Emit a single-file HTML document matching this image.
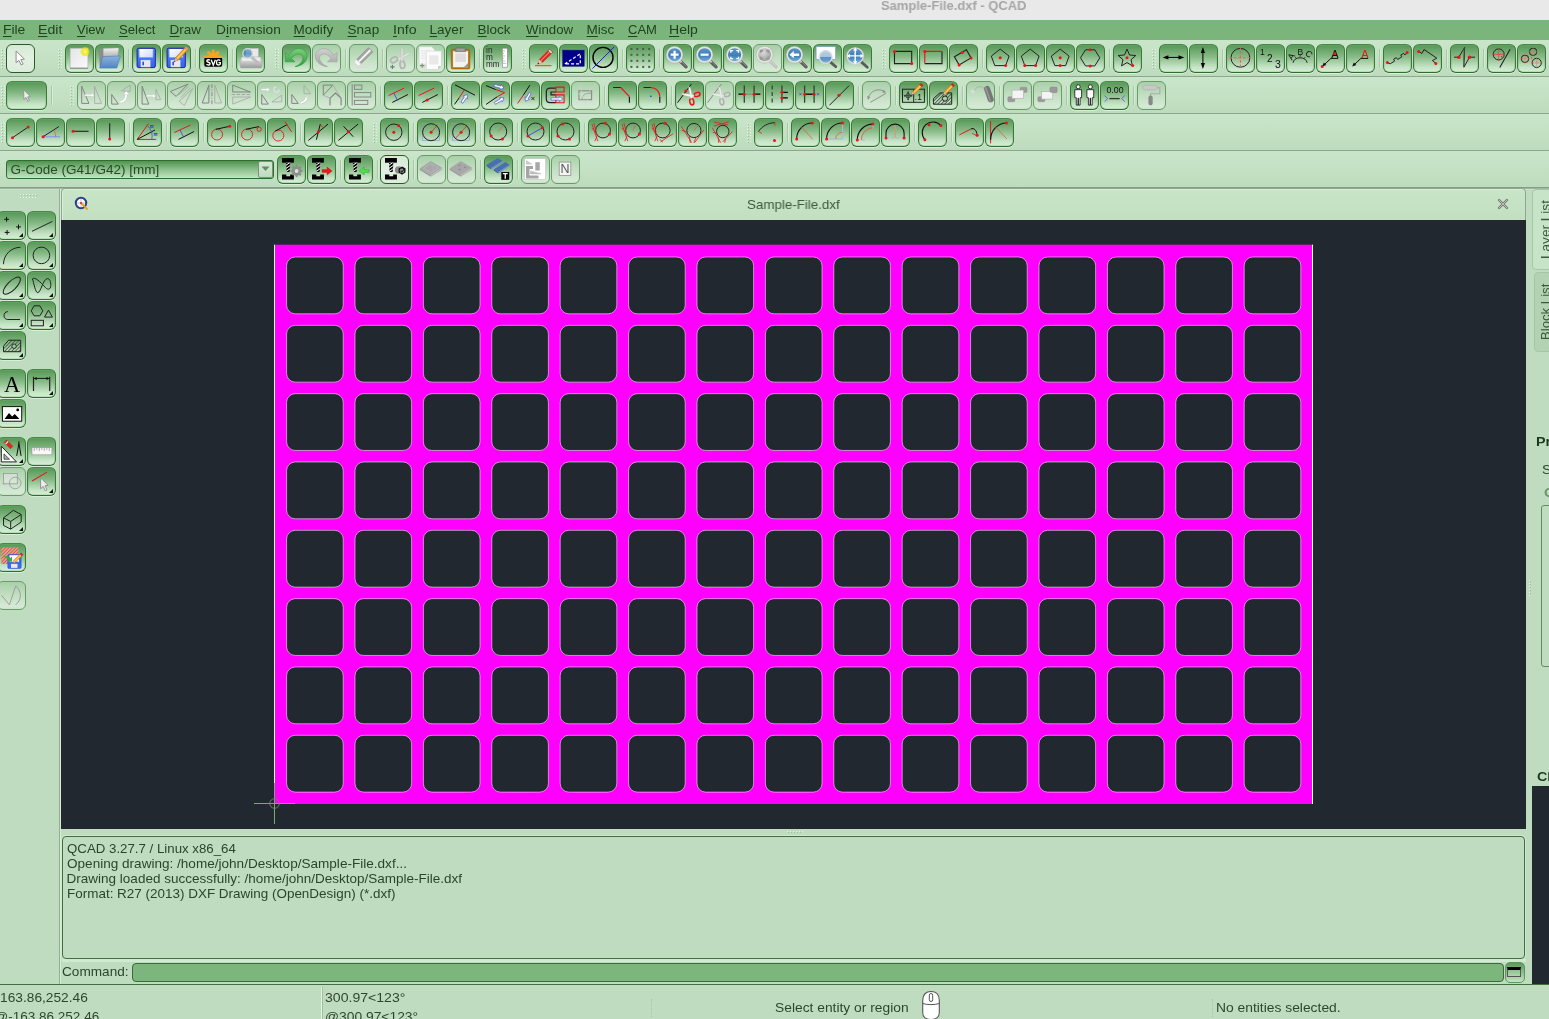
<!DOCTYPE html><html><head><meta charset="utf-8"><title>QCAD</title><style>
*{box-sizing:border-box;margin:0;padding:0}
html,body{width:1549px;height:1019px;overflow:hidden;background:#c0dcc0}
body{position:relative;font-family:"Liberation Sans",sans-serif;font-size:13.5px;color:#2c472c}
.a{position:absolute}
.t{position:absolute;white-space:nowrap;line-height:16px;height:16px;transform-origin:0 0}
.t u{text-decoration-thickness:1px;text-underline-offset:2px}
.tb{position:absolute;left:0;width:1549px;background:linear-gradient(#cae6ca,#c3e0c3 60%,#bddbbd);border-bottom:1px solid #8da68d}
.b{position:absolute;width:29px;height:29px;border:1px solid #2f6e2f;border-top-color:#468a46;border-left-color:#397a39;border-right-color:#397a39;border-radius:6px;background:linear-gradient(#569756,#85b985 42%,#c6e4c6 82%,#d8eed8);box-shadow:inset 0 0 0 1px rgba(120,180,120,.3),0 1px 0 rgba(225,245,225,.7)}
.b.d{border-color:#6a9c6a;background:linear-gradient(#a9cfa9,#c0dec0 45%,#d6ead6 92%,#c8e2c8);box-shadow:none}
.b.c{border-color:#2a5a2a;background:linear-gradient(#d6ead6,#e2f0e2 50%,#dcecdc);box-shadow:none}
.b svg{position:absolute;left:2px;top:2px;width:24px;height:24px;overflow:visible}
.sep{position:absolute;width:1px;height:19px;background:#a8c8a8;box-shadow:1px 0 0 #d4ecd4}
.h{position:absolute;width:5px;height:21px;background-image:radial-gradient(circle,#e6f4e6 0.7px,transparent 0.9px),radial-gradient(circle,#9dbf9d 0.7px,transparent 0.9px);background-size:3px 3px,3px 3px;background-position:0 0,1px 1px}
</style></head><body><div id="root" style="position:absolute;left:0;top:0;width:1549px;height:1019px;overflow:hidden;will-change:transform"><svg class="a" width="0" height="0" style="left:0;top:0"><defs>
<linearGradient id="gPaper" x1="0" y1="0" x2="1" y2="1"><stop offset="0" stop-color="#e4e4e4"/><stop offset="1" stop-color="#fafafa"/></linearGradient>
<radialGradient id="gGlow"><stop offset="0" stop-color="#fffde0"/><stop offset=".35" stop-color="#f6ee30"/><stop offset="1" stop-color="#e8e000" stop-opacity=".55"/></radialGradient>
<linearGradient id="gFold" x1="0" y1="0" x2="0" y2="1"><stop offset="0" stop-color="#8db2dc"/><stop offset="1" stop-color="#4f86c6"/></linearGradient>
<linearGradient id="gGray" x1="0" y1="0" x2="0" y2="1"><stop offset="0" stop-color="#f2f2f2"/><stop offset="1" stop-color="#9a9a9a"/></linearGradient>
<linearGradient id="gFlop" x1="0" y1="0" x2="0" y2="1"><stop offset="0" stop-color="#5a8cff"/><stop offset="1" stop-color="#2f62f0"/></linearGradient>
<linearGradient id="gLab" x1="0" y1="0" x2="1" y2="1"><stop offset="0" stop-color="#ffffff"/><stop offset="1" stop-color="#cdd8ff"/></linearGradient>
<linearGradient id="gLens" x1="0" y1="0" x2="0" y2="1"><stop offset="0" stop-color="#5f97c6"/><stop offset=".55" stop-color="#3f7db8"/><stop offset="1" stop-color="#7db8e4"/></linearGradient>
<radialGradient id="gLensD" cx=".4" cy=".35"><stop offset="0" stop-color="#dcdcdc"/><stop offset="1" stop-color="#a8a8a8"/></radialGradient>
<linearGradient id="gGreenArrow" x1="0" y1="0" x2="0" y2="1"><stop offset="0" stop-color="#7ad07a"/><stop offset="1" stop-color="#2f9a3a"/></linearGradient>
<linearGradient id="gGrayArrow" x1="0" y1="0" x2="0" y2="1"><stop offset="0" stop-color="#d0d0d0"/><stop offset="1" stop-color="#a4a4a4"/></linearGradient>

<pattern id="hat" width="2.500" height="2.500" patternUnits="userSpaceOnUse" patternTransform="rotate(-45)"><path d="M0 1.250H2.500" stroke="#222" stroke-width=".6"/></pattern>
<pattern id="hat2" width="2.600" height="2.600" patternUnits="userSpaceOnUse" patternTransform="rotate(-35)"><rect width="2.600" height="1.700" fill="#000"/></pattern>
<pattern id="hat3" width="2.500" height="2.500" patternUnits="userSpaceOnUse" patternTransform="rotate(-45)"><path d="M0 1.250H2.500" stroke="#222" stroke-width=".55"/></pattern>
<pattern id="hat4" width="2.400" height="2.400" patternUnits="userSpaceOnUse" patternTransform="rotate(-45)"><rect width="2.400" height="2.400" fill="#d9b0a0"/><path d="M0 1.200H2.400" stroke="#e05030" stroke-width="1"/></pattern>
</defs></svg>
<div class="a" style="left:0;top:0;width:1549px;height:20px;background:#e9e9e9"></div>
<div class="a" style="left:0;top:20px;width:1549px;height:20px;background:#7cb57c"></div>
<div class="tb" style="top:40px;height:37px"></div>
<div class="tb" style="top:77px;height:37px"></div>
<div class="tb" style="top:114px;height:37px"></div>
<div class="tb" style="top:151px;height:37px"></div>
<div class="a" style="left:0;top:187px;width:1549px;height:1px;background:#879c84"></div><div class="a" style="left:0;top:188px;width:1549px;height:1px;background:#9fb79d"></div>
<div class="a" style="left:0;top:189px;width:1549px;height:1px;background:#c6e2c6"></div>
<div class="h" style="left:0px;top:48px"></div>
<div class="b c" style="left:6px;top:44px"><svg viewBox="0.2 0.6 24 24"><g transform="translate(1.300 1.200) scale(.88)"><path d="M6.800 3.800v13.400l3.200-2.700 2.600 5.300 2.200-1.100-2.600-5.100 4.100-.5z" fill="#fff" stroke="#8a8a8a" stroke-width="1.100" stroke-linejoin="round"/></g></svg></div>
<div class="h" style="left:57px;top:48px"></div>
<div class="b " style="left:65px;top:44px"><svg viewBox="0.2 0.6 24 24"><rect x="2.300" y="1.800" width="17.800" height="20" fill="url(#gPaper)" stroke="#b0b0b0" stroke-width=".6"/><path d="M2.300 21.800h17.800" stroke="#777" stroke-width=".9"/><circle cx="17.300" cy="5.300" r="4.600" fill="url(#gGlow)"/></svg></div>
<div class="b " style="left:95px;top:44px"><svg viewBox="0.2 0.6 24 24"><path d="M1 3.500l2-1h5l1 1.500h2.500v17.500h-9.500z" fill="#8c8c8c"/><path d="M5.500 2l14.500-.5c.8 0 1 .5 .9 1.200l-1.900 11h-13.500z" fill="url(#gGray)" stroke="#aaa" stroke-width=".4"/><path d="M4.800 10.300l17.700-.800-3.500 12.200h-17z" fill="url(#gFold)" stroke="#3f73b3" stroke-width=".5"/></svg></div>
<div class="sep" style="left:128px;top:49px"></div>
<div class="b " style="left:132px;top:44px"><svg viewBox="0.2 0.6 24 24"><rect x="2.300" y="1.800" width="18.200" height="19.400" rx="1.500" fill="url(#gFlop)" stroke="#1c1c9a" stroke-width="1"/><rect x="4.600" y="2.600" width="13.400" height="8.400" fill="url(#gLab)"/><rect x="6" y="13.600" width="9.600" height="7.100" fill="#e6e6ec" stroke="#9aa" stroke-width=".4"/><rect x="7.600" y="15" width="1.500" height="4" rx=".7" fill="#1f3fd0"/></svg></div>
<div class="b " style="left:162px;top:44px"><svg viewBox="0.2 0.6 24 24"><rect x="2.300" y="1.800" width="18.200" height="19.400" rx="1.500" fill="url(#gFlop)" stroke="#1c1c9a" stroke-width="1"/><rect x="4.600" y="2.600" width="13.400" height="8.400" fill="url(#gLab)"/><rect x="6" y="13.600" width="9.600" height="7.100" fill="#e6e6ec" stroke="#9aa" stroke-width=".4"/><rect x="7.600" y="15" width="1.500" height="4" rx=".7" fill="#1f3fd0"/><g transform="translate(22.500 1.300) rotate(43)"><rect x="-1.800" y="1.500" width="3.600" height="14" fill="#f5a623" stroke="#b56a00" stroke-width=".5"/><rect x="-.5" y="1.500" width="1.100" height="14" fill="#ffd070"/><path d="M-1.800 15.500l1.800 4 1.800-4z" fill="#e8c9a0" stroke="#a67" stroke-width=".4"/><path d="M-.6 18.200l.6 1.500 .6-1.500z" fill="#333"/><rect x="-1.800" y="0" width="3.600" height="1.800" fill="#f49ca0" stroke="#b56a00" stroke-width=".4"/></g></svg></div>
<div class="sep" style="left:195px;top:49px"></div>
<div class="b " style="left:199px;top:44px"><svg viewBox="0.2 0.6 24 24"><g stroke="#f7a41d" stroke-width="2.800" stroke-linecap="round"><path d="M11.400 10.500V4.400M11.400 10.500L6.600 6M11.400 10.500l4.800-4.500M11.400 10.500H4.800M11.400 10.500h6.600"/></g><circle cx="11.400" cy="10" r="3.600" fill="#f7a41d"/><rect x="2.500" y="11" width="17.900" height="9.300" rx="1.600" fill="#000"/><rect x="2.200" y="10.100" width="18.500" height="1.500" fill="#f7a41d"/><g fill="none" stroke="#fff" stroke-width="1.350"><path d="M8.100 13.900C7.400 13.100 5 13 5 14.500C5 16.200 8.300 15.500 8.300 17.300C8.300 19 5.500 18.900 4.700 17.800"/><path d="M9.400 13.300L11.500 18.700L13.600 13.300"/><path d="M18.400 14.300C17.600 13 14.700 13 14.700 16C14.700 19 17.600 19.100 18.500 17.800V16.200H16.700"/></g></svg></div>
<div class="sep" style="left:232px;top:49px"></div>
<div class="b " style="left:236px;top:44px"><svg viewBox="0.2 0.6 24 24"><rect x="7" y="2" width="12.500" height="10" fill="#e9e9e9" stroke="#bbb" stroke-width=".5"/><path d="M3 10.500h18.500l1.500 3.500v6.500c0 .6-.4 1-1 1h-19.500c-.6 0-1-.4-1-1v-6.500z" fill="url(#gGray)" stroke="#aaa" stroke-width=".5"/><path d="M3.500 13.500h17.500" stroke="#fff" stroke-width="1"/><path d="M12.500 10.500l6.500 6" stroke="#bdbdbd" stroke-width="3" stroke-linecap="round"/><circle cx="8.800" cy="7" r="4.700" fill="url(#gLens)" fill-opacity=".75" stroke="#cfd6de" stroke-width="1.300"/></svg></div>
<div class="h" style="left:274px;top:48px"></div>
<div class="b " style="left:282px;top:44px"><svg viewBox="0.2 0.6 24 24"><path d="M.6 5.800L.6 15.400L10.200 15.400L6.700 12.200C9 8.500 12 7.300 14.500 7.600C17.500 8 18.800 10.500 17.800 13.500C16.800 16.500 14 18.800 10.200 20.200C16 19.800 21 16.500 22.200 11C23 6 19 2.200 14 2.200C10 2.200 6.500 4.500 3.800 8.800z" fill="url(#gGreenArrow)" stroke="#2b9a45" stroke-width=".6" stroke-linejoin="round"/></svg></div>
<div class="b d" style="left:312px;top:44px"><svg viewBox="0.2 0.6 24 24"><g transform="translate(22.900 0) scale(-1 1)"><path d="M.6 5.800L.6 15.400L10.200 15.400L6.700 12.200C9 8.500 12 7.300 14.500 7.600C17.500 8 18.800 10.500 17.800 13.500C16.800 16.500 14 18.800 10.200 20.200C16 19.800 21 16.500 22.200 11C23 6 19 2.200 14 2.200C10 2.200 6.500 4.500 3.800 8.800z" fill="url(#gGrayArrow)" stroke="#a0a0a0" stroke-width=".6" stroke-linejoin="round"/></g></svg></div>
<div class="sep" style="left:345px;top:49px"></div>
<div class="b d" style="left:349px;top:44px"><svg viewBox="0.2 0.6 24 24"><g transform="translate(19 3.200) rotate(45)"><rect x="-3.200" y="0" width="6.400" height="17" rx="1.200" fill="#a4a4a4" stroke="#8f8f8f" stroke-width=".5"/><rect x="-.9" y=".5" width="1.900" height="16.500" fill="#f6f6f6"/><rect x="-3.200" y="17" width="6.400" height="3.800" rx=".8" fill="#f4f4f4" stroke="#c4c4c4" stroke-width=".5"/></g><path d="M4.500 21h11" stroke="#dadada" stroke-width="1.300" stroke-linecap="round"/></svg></div>
<div class="sep" style="left:382px;top:49px"></div>
<div class="b d" style="left:386px;top:44px"><svg viewBox="0.2 0.6 24 24"><g fill="none" stroke="#b4b4b4" stroke-width="1.700"><ellipse cx="5.200" cy="13.400" rx="3.800" ry="2.500" transform="rotate(-28 5.200 13.400)"/><ellipse cx="13.600" cy="18.300" rx="2.400" ry="3.800" transform="rotate(-8 13.600 18.300)"/></g><path d="M8.500 12.200L21.200 5.300c-.1 1.600-.9 2.600-2.100 3.300l-8.500 5z" fill="#e6e6e6" stroke="#b4b4b4" stroke-width=".4"/><path d="M12 14.700L12.600 .6c1.100 .9 1.700 2.200 1.600 3.600l-.4 11z" fill="#e6e6e6" stroke="#b4b4b4" stroke-width=".4"/><path d="M1.400 20.500h4.400M3.600 18.300v4.400" stroke="#777" stroke-width="1.100"/></svg></div>
<div class="b d" style="left:416px;top:44px"><svg viewBox="0.2 0.6 24 24"><path d="M.3 .4h12.400l3 3v14.400h-15.400z" fill="#f6f6f6" stroke="#d4d4d4" stroke-width=".5"/><path d="M2.500 4.500h9M2.500 7h9M2.500 9.500h5M2.500 12h5" stroke="#e0e0e0" stroke-width=".7"/><path d="M7.500 4.700h15v15l-3.500 3.400h-11.500z" fill="#fbfbfb" stroke="#d0d0d0" stroke-width=".6"/><path d="M10.500 9h9v9h-9z" fill="#e8e8e8"/><path d="M19 23.100l.6-3.400h2.900z" fill="#c4c4c4"/><path d="M1.300 19.200h4.200M3.400 17.100v4.200" stroke="#888" stroke-width="1.100"/></svg></div>
<div class="b " style="left:446px;top:44px"><svg viewBox="0.2 0.6 24 24"><rect x="2.500" y="3" width="18.500" height="19.500" rx="1" fill="#c17d11" stroke="#8f5902" stroke-width=".6"/><rect x="4.300" y="4.800" width="14.900" height="16" fill="#f3f3f3"/><rect x="6.500" y="7" width="10.500" height="8.500" fill="#dcdcdc"/><path d="M15 20.800l4.200-4.200v4.200z" fill="#999"/><path d="M7.500 1h8.500l1 1.500v2.800h-10.500v-2.800z" fill="#888a85" stroke="#666" stroke-width=".4"/><path d="M8 3.500h7.500" stroke="#b5b7b0" stroke-width="1"/></svg></div>
<div class="sep" style="left:479px;top:49px"></div>
<div class="b " style="left:483px;top:44px"><svg viewBox="0.2 0.6 24 24"><text x="0.300" y="7" font-family="Liberation Sans" font-size="8.300" fill="#2a2a2a">in</text><text x="0.300" y="13.500" font-family="Liberation Sans" font-size="8.300" fill="#2a2a2a">m</text><text x="0.300" y="20.500" font-family="Liberation Sans" font-size="8.300" fill="#2a2a2a" textLength="13.500" lengthAdjust="spacingAndGlyphs">mm</text><rect x="16.500" y="1.800" width="5" height="19" fill="#fff" stroke="#888" stroke-width=".6"/><path d="M16.800 4.500h2.500M16.800 7h1.500M16.800 9.500h2.500M16.800 12h1.500M16.800 14.500h2.500M16.800 17h3.500" stroke="#999" stroke-width=".6"/></svg></div>
<div class="h" style="left:521px;top:48px"></div>
<div class="b " style="left:529px;top:44px"><svg viewBox="0.2 0.6 24 24"><g transform="translate(19.300 4.300) rotate(45)"><rect x="-2.200" y="0" width="4.400" height="14.500" fill="#e3241b" stroke="#a01010" stroke-width=".4"/><rect x="-.8" y="0" width="1.300" height="14.500" fill="#ff7a6a"/><path d="M-2.200 14.500l2.200 4.600 2.200-4.600z" fill="#e9c9a0" stroke="#a67" stroke-width=".3"/><path d="M-.8 17.500l.8 1.800 .8-1.800z" fill="#222"/><rect x="-2.200" y="0" width="4.400" height="2.200" rx=".8" fill="#d8d8d8" stroke="#a01010" stroke-width=".3"/></g><path d="M3.200 19.200h16.500" stroke="#e8584a" stroke-width="1.300"/></svg></div>
<div class="b " style="left:559px;top:44px"><svg viewBox="0.2 0.6 24 24"><rect x="0.800" y="3.700" width="21.600" height="16.200" fill="#00008b" stroke="#202060" stroke-width=".5"/><path d="M3 17.500L18.500 7.300V17.500z" fill="none" stroke="#fff" stroke-width="1.200" stroke-dasharray="3 2"/></svg></div>
<div class="b " style="left:589px;top:44px"><svg viewBox="0.2 0.6 24 24"><circle cx="11.200" cy="11" r="10" fill="none" stroke="#000" stroke-width="1.400"/><path d="M0.600 22.200L22.400 0.500" stroke="#1a1aff" stroke-width="1"/></svg></div>
<div class="sep" style="left:622px;top:49px"></div>
<div class="b " style="left:626px;top:44px"><svg viewBox="0.2 0.6 24 24"><rect x="1.6" y="1.6" width="2" height="2" fill="#4d5e4d"/><rect x="1.6" y="7.4" width="2" height="2" fill="#4d5e4d"/><rect x="1.6" y="13.4" width="2" height="2" fill="#4d5e4d"/><rect x="1.6" y="19.5" width="2" height="2" fill="#4d5e4d"/><rect x="7.5" y="1.6" width="2" height="2" fill="#4d5e4d"/><rect x="7.5" y="7.4" width="2" height="2" fill="#4d5e4d"/><rect x="7.5" y="13.4" width="2" height="2" fill="#4d5e4d"/><rect x="7.5" y="19.5" width="2" height="2" fill="#4d5e4d"/><rect x="13.4" y="1.6" width="2" height="2" fill="#4d5e4d"/><rect x="13.4" y="7.4" width="2" height="2" fill="#4d5e4d"/><rect x="13.4" y="13.4" width="2" height="2" fill="#4d5e4d"/><rect x="13.4" y="19.5" width="2" height="2" fill="#4d5e4d"/><rect x="19.4" y="1.6" width="2" height="2" fill="#4d5e4d"/><rect x="19.4" y="7.4" width="2" height="2" fill="#4d5e4d"/><rect x="19.4" y="13.4" width="2" height="2" fill="#4d5e4d"/><rect x="19.4" y="19.5" width="2" height="2" fill="#4d5e4d"/></svg></div>
<div class="sep" style="left:659px;top:49px"></div>
<div class="b " style="left:663px;top:44px"><svg viewBox="0.2 0.6 24 24"><path d="M15.300 15.600l5 4.900" stroke="#5c5c5c" stroke-width="3.200" stroke-linecap="round"/><path d="M15.600 15.200l4.600 4.500" stroke="#8a8a8a" stroke-width=".9" stroke-linecap="round"/><path d="M14 14.200l1.800 1.800" stroke="#cfcfcf" stroke-width="2"/><circle cx="8.800" cy="8.300" r="7.500" fill="url(#gLens)" stroke="#e2e2e2" stroke-width="1.900"/><circle cx="8.800" cy="8.300" r="8.500" fill="none" stroke="#8f9f8f" stroke-width=".35"/><path d="M4.800 8.300h8M8.800 4.300v8" stroke="#fff" stroke-width="2.200"/></svg></div>
<div class="b " style="left:693px;top:44px"><svg viewBox="0.2 0.6 24 24"><path d="M15.300 15.600l5 4.900" stroke="#5c5c5c" stroke-width="3.200" stroke-linecap="round"/><path d="M15.600 15.200l4.600 4.500" stroke="#8a8a8a" stroke-width=".9" stroke-linecap="round"/><path d="M14 14.200l1.800 1.800" stroke="#cfcfcf" stroke-width="2"/><circle cx="8.800" cy="8.300" r="7.500" fill="url(#gLens)" stroke="#e2e2e2" stroke-width="1.900"/><circle cx="8.800" cy="8.300" r="8.500" fill="none" stroke="#8f9f8f" stroke-width=".35"/><path d="M4.800 8.300h8" stroke="#fff" stroke-width="2.200"/></svg></div>
<div class="b " style="left:723px;top:44px"><svg viewBox="0.2 0.6 24 24"><path d="M15.300 15.600l5 4.900" stroke="#5c5c5c" stroke-width="3.200" stroke-linecap="round"/><path d="M15.600 15.200l4.600 4.500" stroke="#8a8a8a" stroke-width=".9" stroke-linecap="round"/><path d="M14 14.200l1.800 1.800" stroke="#cfcfcf" stroke-width="2"/><circle cx="8.800" cy="8.300" r="7.500" fill="url(#gLens)" stroke="#e2e2e2" stroke-width="1.900"/><circle cx="8.800" cy="8.300" r="8.500" fill="none" stroke="#8f9f8f" stroke-width=".35"/><path d="M5 6.300v-2h2.300M10.400 4.300h2.300v2M12.700 10.300v2h-2.300M7.300 12.300h-2.300v-2" stroke="#fff" stroke-width="1.300" fill="none"/></svg></div>
<div class="b d" style="left:753px;top:44px"><svg viewBox="0.2 0.6 24 24"><path d="M15.300 15.600l5 4.900" stroke="#c0c0c0" stroke-width="3.200" stroke-linecap="round"/><path d="M15.600 15.200l4.600 4.500" stroke="#d8d8d8" stroke-width=".9" stroke-linecap="round"/><path d="M14 14.200l1.800 1.800" stroke="#cfcfcf" stroke-width="2"/><circle cx="8.800" cy="8.300" r="7.500" fill="url(#gLensD)" stroke="#e6e6e6" stroke-width="1.900"/><circle cx="8.800" cy="8.300" r="8.500" fill="none" stroke="#8f9f8f" stroke-width=".35"/><path d="M5 6.300v-2h2.300M10.400 4.300h2.300v2M12.700 10.300v2h-2.300M7.300 12.300h-2.300v-2" stroke="#999" stroke-width="2" fill="none"/></svg></div>
<div class="b " style="left:783px;top:44px"><svg viewBox="0.2 0.6 24 24"><path d="M15.300 15.600l5 4.900" stroke="#5c5c5c" stroke-width="3.200" stroke-linecap="round"/><path d="M15.600 15.200l4.600 4.500" stroke="#8a8a8a" stroke-width=".9" stroke-linecap="round"/><path d="M14 14.200l1.800 1.800" stroke="#cfcfcf" stroke-width="2"/><circle cx="8.800" cy="8.300" r="7.500" fill="url(#gLens)" stroke="#e2e2e2" stroke-width="1.900"/><circle cx="8.800" cy="8.300" r="8.500" fill="none" stroke="#8f9f8f" stroke-width=".35"/><path d="M3.600 8.300l4.400-3.600v2.300h5.400v2.600h-5.400v2.300z" fill="#fff"/></svg></div>
<div class="b " style="left:813px;top:44px"><svg viewBox="0.2 0.6 24 24"><rect x="0.300" y="0.300" width="19.500" height="12.600" fill="#fff" stroke="#7f9fd8" stroke-width=".7"/><path d="M14.500 15.500l5.500 4.800" stroke="#5a5a5a" stroke-width="2.800" stroke-linecap="round"/><circle cx="9.900" cy="10.600" r="6.400" fill="url(#gLens)" fill-opacity=".85" stroke="#dcdcdc" stroke-width="1.400"/><path d="M3.800 10.600a6.100 6.100 0 0 1 12.200 0z" fill="#fff" fill-opacity=".45"/></svg></div>
<div class="b " style="left:843px;top:44px"><svg viewBox="0.2 0.6 24 24"><path d="M15.500 15.500l6 5.300" stroke="#5a5a5a" stroke-width="2.800" stroke-linecap="round"/><circle cx="9.400" cy="9.500" r="8" fill="url(#gLens)" stroke="#dcdcdc" stroke-width="1.400"/><path d="M9.400 1.200l2.200 3h-1.500v4.600h4.600v-1.500l3 2.200-3 2.200v-1.500h-4.600v4.600h1.500l-2.200 3-2.200-3h1.500v-4.600h-4.600v1.500l-3-2.200 3-2.200v1.500h4.600v-4.600h-1.500z" fill="#fff"/></svg></div>
<div class="h" style="left:881px;top:48px"></div>
<div class="b " style="left:889px;top:44px"><svg viewBox="0.2 0.6 24 24"><path d="M2.700 5H19.900V17.200H2.700z" stroke="#222" stroke-width="1.1" fill="none" /><circle cx="2.7" cy="5" r="1.5" fill="#e8161b"/><circle cx="19.9" cy="17.2" r="1.5" fill="#e8161b"/></svg></div>
<div class="b " style="left:919px;top:44px"><svg viewBox="0.2 0.6 24 24"><path d="M3 17.200H20.200V5" stroke="#222" stroke-width="1.1" fill="none" /><path d="M3 17.200V5H20.200" stroke="#e8161b" stroke-width="1.1" fill="none" /><circle cx="3" cy="5" r="1.5" fill="#e8161b"/></svg></div>
<div class="b " style="left:949px;top:44px"><svg viewBox="0.2 0.6 24 24"><path d="M2.600 10.400L14.600 3.400L19.200 11.500L7.300 18.500z" stroke="#222" stroke-width="1.1" fill="none" /><circle cx="10.5" cy="6" r="1.5" fill="#e8161b"/><circle cx="19.2" cy="11.5" r="1.5" fill="#e8161b"/><circle cx="7.3" cy="18.5" r="1.5" fill="#e8161b"/></svg></div>
<div class="sep" style="left:982px;top:49px"></div>
<div class="b " style="left:986px;top:44px"><svg viewBox="0.2 0.6 24 24"><path d="M11.400 2.700L20.300 9.700L16.800 19.200H6L2.500 9.700z" stroke="#222" stroke-width="1" fill="none" /><circle cx="11.4" cy="11.4" r="1.5" fill="#e8161b"/><circle cx="16.8" cy="19.2" r="1.5" fill="#e8161b"/></svg></div>
<div class="b " style="left:1016px;top:44px"><svg viewBox="0.2 0.6 24 24"><path d="M11.400 2.700L20.300 9.700L16.800 19.200H6L2.500 9.700z" stroke="#222" stroke-width="1" fill="none" /><circle cx="6" cy="19.2" r="1.5" fill="#e8161b"/><circle cx="16.8" cy="19.2" r="1.5" fill="#e8161b"/></svg></div>
<div class="b " style="left:1046px;top:44px"><svg viewBox="0.2 0.6 24 24"><path d="M11.400 2.700L20.300 9.700L16.800 19.200H6L2.500 9.700z" stroke="#222" stroke-width="1" fill="none" /><circle cx="11.4" cy="11.4" r="1.5" fill="#e8161b"/><circle cx="11.4" cy="19.2" r="1.5" fill="#e8161b"/></svg></div>
<div class="b " style="left:1076px;top:44px"><svg viewBox="0.2 0.6 24 24"><path d="M1.700 11.400L6.700 3.400H16L21 11.400L16 19.500H6.700z" stroke="#222" stroke-width="1" fill="none" /><circle cx="11.4" cy="3.4" r="1.5" fill="#e8161b"/><circle cx="11.4" cy="19.5" r="1.5" fill="#e8161b"/></svg></div>
<div class="sep" style="left:1109px;top:49px"></div>
<div class="b " style="left:1113px;top:44px"><svg viewBox="0.2 0.6 24 24"><path d="M11.2 2.7L13.7 8.6L20.0 9.1L15.2 13.3L16.7 19.5L11.2 16.2L5.7 19.5L7.2 13.3L2.4 9.1L8.7 8.6z" stroke="#222" stroke-width="1" fill="none" /><circle cx="11.2" cy="11.4" r="1.5" fill="#e8161b"/><circle cx="16.9" cy="19.1" r="1.5" fill="#e8161b"/></svg></div>
<div class="h" style="left:1151px;top:48px"></div>
<div class="b " style="left:1159px;top:44px"><svg viewBox="0.2 0.6 24 24"><path d="M4 11H19.500" stroke="#000" stroke-width="1"/><path d="M0.800 11l5.800-2.100v4.200zM22.500 11l-5.800-2.100v4.200z" fill="#000"/></svg></div>
<div class="b " style="left:1189px;top:44px"><svg viewBox="0.2 0.6 24 24"><path d="M11.100 4V19" stroke="#000" stroke-width="1"/><path d="M11.100 0.700l-2.100 5.800h4.200zM11.100 22.500l-2.100-5.800h4.200z" fill="#000"/></svg></div>
<div class="sep" style="left:1222px;top:49px"></div>
<div class="b " style="left:1226px;top:44px"><svg viewBox="0.2 0.6 24 24"><circle cx="11.600" cy="11.400" r="9.400" fill="none" stroke="#222" stroke-width="1"/><path d="M0.500 11.400H22.700M11.600 0.200V22.700" stroke="#f25a5a" stroke-width="1" stroke-dasharray="2.800 1.700"/></svg></div>
<div class="b " style="left:1256px;top:44px"><svg viewBox="0.2 0.6 24 24"><text x="1.200" y="8.300" font-family="Liberation Sans" font-size="8.500" fill="#111">1</text><text x="8.300" y="15.300" font-family="Liberation Sans" font-size="10" fill="#111">2</text><text x="16.300" y="21.800" font-family="Liberation Sans" font-size="10.500" fill="#111">3</text></svg></div>
<div class="b " style="left:1286px;top:44px"><svg viewBox="0.2 0.6 24 24"><path d="M4.200 16.400A7.300 6.500 0 0 1 18.400 16.400" fill="none" stroke="#222" stroke-width="1"/><path d="M11.400 8.700v1.700M6.500 10.800l1.100 1.400M16.300 10.800l-1.100 1.400" stroke="#222" stroke-width=".9"/><text transform="translate(3.300 14.300) rotate(-55)" font-family="Liberation Sans" font-size="9" fill="#111">A</text><text x="8.700" y="8.600" font-family="Liberation Sans" font-size="8.500" fill="#111">B</text><text transform="translate(15.800 7.800) rotate(40)" font-family="Liberation Sans" font-size="9" fill="#111">C</text></svg></div>
<div class="b " style="left:1316px;top:44px"><svg viewBox="0.2 0.6 24 24"><text x="16" y="11.300" text-anchor="middle" font-family="Liberation Sans" font-size="11" fill="#111">A</text><path d="M19.300 12H12.100L5 18.700" fill="none" stroke="#111" stroke-width="1"/><path d="M3.400 20.200l1.600-4.200 2.500 2.600z" fill="#111"/><circle cx="3.4" cy="20.1" r="1.5" fill="#e8161b"/><circle cx="15.9" cy="7" r="1.5" fill="#e8161b"/></svg></div>
<div class="b " style="left:1346px;top:44px"><svg viewBox="0.2 0.6 24 24"><text x="16" y="11.300" text-anchor="middle" font-family="Liberation Sans" font-size="11" fill="#e8161b">A</text><path d="M19.300 12H12.100L5 18.700" fill="none" stroke="#111" stroke-width="1"/><path d="M3.400 20.200l1.600-4.200 2.500 2.600z" fill="#111"/></svg></div>
<div class="sep" style="left:1379px;top:49px"></div>
<div class="b " style="left:1383px;top:44px"><svg viewBox="0.2 0.6 24 24"><path d="M1.600 16.200L4.500 17.300L8.800 14.700L7.800 12.800L10.500 11.200L11.800 13L16 10.500L15 8.600L17.800 7L19 8.600L21.300 6" stroke="#222" stroke-width="1" fill="none" /><circle cx="1.6" cy="16.2" r="1.5" fill="#e8161b"/><circle cx="21.3" cy="6" r="1.5" fill="#e8161b"/></svg></div>
<div class="b " style="left:1413px;top:44px"><svg viewBox="0.2 0.6 24 24"><path d="M2.800 5L6.100 7.100L8.200 3.100L21 11.800L16.600 14.100L20 17" stroke="#222" stroke-width="1" fill="none" /><circle cx="2.8" cy="5" r="1.5" fill="#e8161b"/><circle cx="20" cy="17" r="1.5" fill="#e8161b"/></svg></div>
<div class="sep" style="left:1446px;top:49px"></div>
<div class="b " style="left:1450px;top:44px"><svg viewBox="0.2 0.6 24 24"><path d="M1.300 10.800H6L11.800 1.100L11.100 20.800L16.700 10.800H22.300" stroke="#222" stroke-width="1" fill="none" /><path d="M11.800 1.100L11.100 20.800L10.300 20.300L10.900 2.600z" fill="#4a6a4a"/><circle cx="6" cy="10.8" r="1.7" fill="#e8161b"/><circle cx="16.7" cy="10.8" r="1.7" fill="#e8161b"/></svg></div>
<div class="sep" style="left:1483px;top:49px"></div>
<div class="b " style="left:1487px;top:44px"><svg viewBox="0.2 0.6 24 24"><circle cx="8.900" cy="8" r="5.500" fill="none" stroke="#222" stroke-width="1"/><path d="M2.500 8H15M8.900 2V14.500" stroke="#ee4040" stroke-width=".8"/><circle cx="11.8" cy="10.2" r="0.7" fill="#e8161b"/><path d="M10 21L20.300 2.900" stroke="#222" stroke-width="1.1" fill="none" /></svg></div>
<div class="b " style="left:1517px;top:44px"><svg viewBox="0.2 0.6 24 24"><circle cx="13.3" cy="5.4" r="3.7" fill="none" stroke="#222" stroke-width="1"/><path d="M8.600000000000001 5.4H18.0M13.3 0.7000000000000002V10.100000000000001" stroke="#e8786a" stroke-width=".9" stroke-dasharray="1.200 .6"/><circle cx="5.2" cy="12.4" r="3.7" fill="none" stroke="#222" stroke-width="1"/><path d="M0.5 12.4H9.9M5.2 7.699999999999999V17.1" stroke="#e8786a" stroke-width=".9" stroke-dasharray="1.200 .6"/><circle cx="16.9" cy="16.5" r="4.6" fill="none" stroke="#222" stroke-width="1"/><path d="M11.299999999999999 16.5H22.5M16.9 10.9V22.1" stroke="#e8786a" stroke-width=".9" stroke-dasharray="1.200 .6"/><circle cx="11.8" cy="11.5" r="0.8" fill="#f05050"/></svg></div>
<div class="h" style="left:0px;top:85px"></div>
<div class="b " style="left:6px;top:81px;width:41px"><svg viewBox="0.2 0.6 24 24"><g transform="translate(12.300 4) scale(.7)"><path d="M3.800 3.800v13.400l3.200-2.700 2.600 5.300 2.200-1.100-2.600-5.100 4.100-.5z" fill="#eee" stroke="#8f8f8f" stroke-width="1.200" stroke-linejoin="round"/></g></svg></div>
<div class="sep" style="left:51px;top:86px"></div>
<div class="h" style="left:69px;top:85px"></div>
<div class="b d" style="left:77px;top:81px"><svg viewBox="0.2 0.6 24 24"><path d="M1.9 2.9L1.9 20L9.1 20z" fill="none" stroke="#808080" stroke-width="0.95"/><path d="M14.8 2.9L14.8 20L21.8 20z" fill="none" stroke="#a6a6a6" stroke-width="0.8"/><g transform="translate(5.1 11.8) rotate(0.0)"><path d="M0 -.9H6.4V-2.300L9.4 0L6.4 2.300V.9H0z" fill="#fff" stroke="#c4c4c4" stroke-width=".5"/></g></svg></div>
<div class="b d" style="left:107px;top:81px"><svg viewBox="0.2 0.6 24 24"><path d="M1.9 11.1L1.9 20.7L8.5 20.7z" fill="none" stroke="#808080" stroke-width="0.95"/><path d="M20.4 1.7L20.4 8.1L11.5 7.4z" fill="none" stroke="#a6a6a6" stroke-width="0.8"/><path d="M10.500 18.800c4.500-1 6-4 6-8.300" fill="none" stroke="#c8c8c8" stroke-width="2.800"/><path d="M10.500 18.800c4.500-1 6-4 6-8.300" fill="none" stroke="#fff" stroke-width="1.800"/><path d="M16.500 7.500l-2.800 3.800h5.600z" fill="#fff" stroke="#c4c4c4" stroke-width=".5"/></svg></div>
<div class="b d" style="left:137px;top:81px"><svg viewBox="0.2 0.6 24 24"><path d="M2.3 2.9L2.3 20.7L9 20.7z" fill="none" stroke="#808080" stroke-width="0.95"/><path d="M16.1 5.9L16.1 16.3L20.9 16.3z" fill="none" stroke="#a6a6a6" stroke-width="0.8"/><g transform="translate(6.5 12.5) rotate(0.0)"><path d="M0 -.9H6.5V-2.300L9.5 0L6.5 2.300V.9H0z" fill="#fff" stroke="#c4c4c4" stroke-width=".5"/></g></svg></div>
<div class="b d" style="left:167px;top:81px"><svg viewBox="0.2 0.6 24 24"><path d="M0.5 8.1L18.3 0.7L6.4 13z" fill="none" stroke="#808080" stroke-width="0.95"/><path d="M9.4 17.8L22.8 5.2L14.6 22.2z" fill="none" stroke="#a6a6a6" stroke-width="0.8"/><path d="M9 11.500L19 3M11 14L20.500 4.500" stroke="#a6a6a6" stroke-width="0.7" fill="none" /></svg></div>
<div class="b d" style="left:197px;top:81px"><svg viewBox="0.2 0.6 24 24"><path d="M9.1 1.7L9.1 19.6L2.4 19.6z" fill="none" stroke="#808080" stroke-width="0.95"/><path d="M15 1.7L15 19.6L21.7 19.6z" fill="none" stroke="#a6a6a6" stroke-width="0.8"/><path d="M12.100 .8V22" stroke="#808080" stroke-width="0.9" fill="none" stroke-dasharray="4 1.500 1 1.500"/></svg></div>
<div class="b d" style="left:227px;top:81px"><svg viewBox="0.2 0.6 24 24"><path d="M2.9 1.7L20.7 8.6L2.9 8.6z" fill="none" stroke="#808080" stroke-width="0.95"/><path d="M2.9 13.6L20.7 13.6L2.9 20.7z" fill="none" stroke="#a6a6a6" stroke-width="0.8"/><path d="M1.700 11.100H21.500" stroke="#a6a6a6" stroke-width="1" fill="none" stroke-dasharray="3.500 1.500"/></svg></div>
<div class="b d" style="left:257px;top:81px"><svg viewBox="0.2 0.6 24 24"><path d="M1.9 11.1L1.9 20.7L8.5 20.7z" fill="none" stroke="#808080" stroke-width="0.95"/><path d="M12.2 18.5L21.9 11.8L21.9 18.5z" fill="none" stroke="#a6a6a6" stroke-width="0.8"/><g transform="translate(1.5 6.2) rotate(0.0)"><path d="M0 -.9H5.5V-2.300L8.5 0L5.5 2.300V.9H0z" fill="#fff" stroke="#c4c4c4" stroke-width=".5"/></g><circle cx="16.700" cy="6.200" r="2.700" fill="none" stroke="#ddd" stroke-width="1.500" stroke-dasharray="12 5"/></svg></div>
<div class="b d" style="left:287px;top:81px"><svg viewBox="0.2 0.6 24 24"><path d="M2 11.1L2 20L8.5 20z" fill="none" stroke="#808080" stroke-width="0.95"/><path d="M14.2 1.7L20.8 10.3L14.2 10.3z" fill="none" stroke="#a6a6a6" stroke-width="0.8"/><path d="M11 19.500c3.500-.8 5.200-2.800 5.800-5.500" fill="none" stroke="#c8c8c8" stroke-width="2.800"/><path d="M11 19.500c3.500-.8 5.200-2.800 5.800-5.500" fill="none" stroke="#fff" stroke-width="1.800"/></svg></div>
<div class="b d" style="left:317px;top:81px"><svg viewBox="0.2 0.6 24 24"><path d="M3.500 1.700H13.100L3.500 11.800z" stroke="#808080" stroke-width="0.95" fill="none" /><path d="M13.100 1.700L21.300 14.800M3.500 11.800L10.200 14.800" stroke="#a6a6a6" stroke-width="0.8" fill="none" /><path d="M10.200 22.200V14.800L15.700 9.600L21.300 14.800V22.200" stroke="#808080" stroke-width="1.1" fill="none" /></svg></div>
<div class="b d" style="left:347px;top:81px"><svg viewBox="0.2 0.6 24 24"><path d="M2.400 .7V22.200" stroke="#808080" stroke-width="0.9" fill="none" /><rect x="4.600" y="1.700" width="7.500" height="4.200" fill="none" stroke="#808080" stroke-width=".9"/><rect x="4.600" y="9.200" width="16.400" height="4.400" fill="none" stroke="#808080" stroke-width=".9"/><rect x="4.600" y="17" width="13.400" height="4" fill="none" stroke="#808080" stroke-width=".9"/></svg></div>
<div class="sep" style="left:380px;top:86px"></div>
<div class="b " style="left:384px;top:81px"><svg viewBox="0.2 0.6 24 24"><path d="M1.800 12.100L17.400 4.700" stroke="#e8161b" stroke-width="1" fill="none" /><path d="M5.500 19L21.100 11.100" stroke="#111" stroke-width="1" fill="none" /><path d="M7 9.600L10.700 17" stroke="#3a4ae0" stroke-width="0.9" fill="none" /></svg></div>
<div class="b " style="left:414px;top:81px"><svg viewBox="0.2 0.6 24 24"><path d="M1.800 12.100L17.400 4.700" stroke="#e8161b" stroke-width="1" fill="none" /><path d="M5.500 19L21.100 11.100" stroke="#111" stroke-width="1" fill="none" /><circle cx="10.4" cy="16.6" r="1.5" fill="#e8161b"/></svg></div>
<div class="sep" style="left:447px;top:86px"></div>
<div class="b " style="left:451px;top:81px"><svg viewBox="0.2 0.6 24 24"><path d="M1.200 1.400L21.200 11.800M.7 21L5.600 14.100" stroke="#111" stroke-width="1" fill="none" /><path d="M5.600 14.100L10.500 6.600" stroke="#e8161b" stroke-width="1" fill="none" /><g transform="translate(8.1 19.3) rotate(-56.6)"><path d="M0 -1.100H6.3V-2.600L9.8 0L6.3 2.600V1.100H0z" fill="#fff" stroke="#5a5af0" stroke-width=".7" stroke-linejoin="round"/></g></svg></div>
<div class="b " style="left:481px;top:81px"><svg viewBox="0.2 0.6 24 24"><path d="M2.300 2.200L12 6.200M2.300 21L13.500 13.300" stroke="#111" stroke-width="1" fill="none" /><path d="M12 6.200L20.900 9.200L13.500 13.300" stroke="#e8161b" stroke-width="1" fill="none" /><g transform="translate(10.5 2) rotate(15.7)"><path d="M0 -1.100H6.5V-2.600L10.0 0L6.5 2.600V1.100H0z" fill="#fff" stroke="#5a5af0" stroke-width=".7" stroke-linejoin="round"/></g><g transform="translate(11.2 20) rotate(-31.7)"><path d="M0 -1.100H7.0V-2.600L10.5 0L7.0 2.600V1.100H0z" fill="#fff" stroke="#5a5af0" stroke-width=".7" stroke-linejoin="round"/></g></svg></div>
<div class="b " style="left:511px;top:81px"><svg viewBox="0.2 0.6 24 24"><path d="M9.500 11.800L16.100 1.700" stroke="#111" stroke-width="1" fill="none" /><path d="M3.800 20L9.500 11.800" stroke="#e8161b" stroke-width="1" fill="none" /><g transform="translate(16.4 9.6) rotate(119.8)"><path d="M0 -1.100H6.0V-2.600L9.5 0L6.0 2.600V1.100H0z" fill="#fff" stroke="#5a5af0" stroke-width=".7" stroke-linejoin="round"/></g><path d="M17.500 13.500l3.200 3.200M20.700 13.500l-3.200 3.200" stroke="#111" stroke-width="0.8" fill="none" /></svg></div>
<div class="b " style="left:541px;top:81px"><svg viewBox="0.2 0.6 24 24"><path d="M12.100 4.700H6.400Q2.500 4.700 2.500 8.600V15.400Q2.500 19.300 6.400 19.300H12.100M12.100 8.600H7.200V11.500H12.100" stroke="#222" stroke-width="1.2" fill="none" /><path d="M12.100 3.700H20.300V8.600H12.100zM12.100 11.500H20.300V19.300H12.100z" stroke="#e8161b" stroke-width="1.1" fill="none" /><g transform="translate(7.2 15.5) rotate(0.0)"><path d="M0 -1.100H8.3V-2.600L11.8 0L8.3 2.600V1.100H0z" fill="#fff" stroke="#5a5af0" stroke-width=".7" stroke-linejoin="round"/></g></svg></div>
<div class="b d" style="left:571px;top:81px"><svg viewBox="0.2 0.6 24 24"><rect x="5.100" y="7.400" width="12.700" height="8.900" fill="none" stroke="#888" stroke-width="1.100"/><path d="M8 16.300a6.500 6.500 0 0 1 6.500-6.500h3.300" fill="none" stroke="#999" stroke-width=".9"/><path d="M1 22L22 1M1 8L22 22M6 1L12 23" stroke="#cfd8cf" stroke-width=".5"/></svg></div>
<div class="sep" style="left:604px;top:86px"></div>
<div class="b " style="left:608px;top:81px"><svg viewBox="0.2 0.6 24 24"><path d="M2.300 4.100H10M18.600 13.300V19.300" stroke="#222" stroke-width="1.2" fill="none" /><path d="M10 4.100L18.600 13.300" stroke="#e8161b" stroke-width="1.2" fill="none" /></svg></div>
<div class="b " style="left:638px;top:81px"><svg viewBox="0.2 0.6 24 24"><path d="M2.700 4.100H10.100M19 13.300V19.300" stroke="#222" stroke-width="1.2" fill="none" /><path d="M10.100 4.100A8.900 9.200 0 0 1 19 13.300" stroke="#e8161b" stroke-width="1.2" fill="none" /><circle cx="10.1" cy="12.9" r="0.8" fill="#2020e0"/></svg></div>
<div class="sep" style="left:671px;top:86px"></div>
<div class="b " style="left:675px;top:81px"><svg viewBox="0.2 0.6 24 24"><path d="M-.3 19.300L13.500 .7" stroke="#111" stroke-width="1" fill="none" /><g fill="none" stroke="#e8161b" stroke-width="1.500"><ellipse cx="19.300" cy="11.100" rx="3" ry="2" transform="rotate(-20 19.300 11.100)"/><ellipse cx="14" cy="18.300" rx="2" ry="3.200" transform="rotate(-12 14 18.300)"/></g><path d="M16.500 11.500L4 9.800c.5 1.200 1.500 2 3 2.300l8 1.700z" fill="#fff" stroke="#bbb" stroke-width=".3"/><path d="M13 15.500L10.600 2.900c1.200.5 2 1.500 2.300 3l1.700 8z" fill="#fff" stroke="#bbb" stroke-width=".3"/><circle cx="8" cy="7.7" r="1.5" fill="#e8161b"/></svg></div>
<div class="b d" style="left:705px;top:81px"><svg viewBox="0.2 0.6 24 24"><path d="M-.3 19.300L13.500 .7" stroke="#888" stroke-width="1" fill="none" /><g fill="none" stroke="#b0b0b0" stroke-width="1.500"><ellipse cx="19.300" cy="11.100" rx="3" ry="2" transform="rotate(-20 19.300 11.100)"/><ellipse cx="14" cy="18.300" rx="2" ry="3.200" transform="rotate(-12 14 18.300)"/></g><path d="M16.500 11.500L4 9.800c.5 1.200 1.500 2 3 2.300l8 1.700z" fill="#f0f0f0" stroke="#bbb" stroke-width=".3"/><path d="M13 15.500L10.600 2.900c1.200.5 2 1.500 2.300 3l1.700 8z" fill="#f0f0f0" stroke="#bbb" stroke-width=".3"/></svg></div>
<div class="b " style="left:735px;top:81px"><svg viewBox="0.2 0.6 24 24"><path d="M6.500 2.200V19.300M16.300 2.200V19.300" stroke="#334433" stroke-width="1.3" fill="none" /><path d="M.6 10.800H6.500M16.300 10.800H22.600" stroke="#000" stroke-width="1.2" fill="none" /><path d="M6.500 10.800H16.300" stroke="#666" stroke-width="0.6" fill="none" /><circle cx="6.5" cy="10.8" r="1.5" fill="#e8161b"/><circle cx="16.3" cy="10.8" r="1.5" fill="#e8161b"/></svg></div>
<div class="b " style="left:765px;top:81px"><svg viewBox="0.2 0.6 24 24"><path d="M4.400 2.200V19.300" stroke="#334433" stroke-width="1.2" fill="none" stroke-dasharray="4 2.500"/><path d="M14.100 2.200V19.300" stroke="#334433" stroke-width="1.3" fill="none" /><path d="M14.100 8.900H20M14.100 14.500H20" stroke="#000" stroke-width="1.2" fill="none" /><path d="M5 8.900H14M5 14.500H14" stroke="#8aa88a" stroke-width="0.5" fill="none" stroke-dasharray="1 1"/><circle cx="14.1" cy="8.9" r="1.5" fill="#e8161b"/><circle cx="14.1" cy="14.5" r="1.5" fill="#e8161b"/></svg></div>
<div class="b " style="left:795px;top:81px"><svg viewBox="0.2 0.6 24 24"><path d="M6.800 2.200V19.300M16.300 2.200V19.300" stroke="#334433" stroke-width="1.3" fill="none" /><path d="M6.800 10.800H16.300" stroke="#000" stroke-width="1.3" fill="none" /><path d="M1.600 9.700l2.200 2.200M3.800 9.700l-2.200 2.200M19.100 9.700l2.200 2.200M21.300 9.700l-2.200 2.200" stroke="#3a3ae0" stroke-width="0.7" fill="none" /><circle cx="6.8" cy="10.8" r="1.5" fill="#e8161b"/><circle cx="16.3" cy="10.8" r="1.5" fill="#e8161b"/></svg></div>
<div class="b " style="left:825px;top:81px"><svg viewBox="0.2 0.6 24 24"><path d="M1.600 21.900L21.300 2.200" stroke="#222" stroke-width="1" fill="none" /><circle cx="11.2" cy="11.8" r="1.5" fill="#e8161b"/></svg></div>
<div class="sep" style="left:858px;top:86px"></div>
<div class="b d" style="left:862px;top:81px"><svg viewBox="0.2 0.6 24 24"><path d="M3.600 14.500C5 8 13 4 19.500 8" stroke="#909090" stroke-width="1" fill="none" /><path d="M3.200 16.500l-.8-4 3 1zM21.300 9.300l-4-.3 1.800-2.600z" fill="#909090"/><path d="M5.500 19L21 10" stroke="#909090" stroke-width="1" fill="none" /></svg></div>
<div class="sep" style="left:895px;top:86px"></div>
<div class="b " style="left:899px;top:81px"><svg viewBox="0.2 0.6 24 24"><rect x=".7" y="5.800" width="21.900" height="13.100" fill="none" stroke="#222" stroke-width="1"/><path d="M11.900 5.800V18.900" stroke="#222" stroke-width="1"/><circle cx="6.300" cy="12.400" r="2.200" fill="none" stroke="#222" stroke-width=".8"/><path d="M2.300 12.400H10.300M6.300 8.300V16.500" stroke="#222" stroke-width=".8"/><path d="M6.300 7.800l-.9 1.300h1.800zM6.300 17l-.9-1.300h1.800zM1.800 12.400l1.300-.9v1.800zM10.800 12.400l-1.300-.9v1.800z" fill="#222"/><text x="13" y="17" font-family="Liberation Sans" font-size="8.500" fill="#111">.1</text><g transform="translate(19 2.2) rotate(45) scale(1)"><rect x="-1.500" y="0" width="3" height="10" fill="#f5a623" stroke="#b56a00" stroke-width=".4"/><rect x="-.4" y="0" width=".9" height="10" fill="#ffd070"/><path d="M-1.500 10l1.500 3.200 1.500-3.200z" fill="#e8c9a0" stroke="#a67" stroke-width=".3"/><path d="M-.5 12l.5 1.200 .5-1.200z" fill="#222"/><rect x="-1.500" y="-1.800" width="3" height="2" fill="#e3241b" stroke="#a01010" stroke-width=".3"/></g></svg></div>
<div class="b " style="left:929px;top:81px"><svg viewBox="0.2 0.6 24 24"><path d="M1.600 20.800V15.200L8.100 9.500H19.900V20.800z" fill="url(#hat)" stroke="#222" stroke-width="1"/><circle cx="13.200" cy="15.200" r="2.600" fill="#a9cfa9" stroke="#222" stroke-width="1"/><g transform="translate(20.5 2.2) rotate(45) scale(1)"><rect x="-1.500" y="0" width="3" height="10" fill="#f5a623" stroke="#b56a00" stroke-width=".4"/><rect x="-.4" y="0" width=".9" height="10" fill="#ffd070"/><path d="M-1.500 10l1.500 3.200 1.500-3.200z" fill="#e8c9a0" stroke="#a67" stroke-width=".3"/><path d="M-.5 12l.5 1.200 .5-1.200z" fill="#222"/><rect x="-1.500" y="-1.800" width="3" height="2" fill="#e3241b" stroke="#a01010" stroke-width=".3"/></g></svg></div>
<div class="sep" style="left:962px;top:86px"></div>
<div class="b d" style="left:966px;top:81px"><svg viewBox="0.2 0.6 24 24"><path d="M15 5C12 2 8 3 5.500 7" fill="none" stroke="#aaa" stroke-width=".9"/><g stroke="#ddd" stroke-width=".8"><path d="M1.500 8.200h5M4 5.700v5M2.200 6.400l3.600 3.600M5.800 6.400l-3.600 3.600"/></g><g transform="translate(14.800 3.800) rotate(-19)"><rect x="0" y="0" width="5.500" height="16.500" rx="2.500" fill="#777" stroke="#666" stroke-width=".4"/><rect x="1" y="0.500" width="1.500" height="15.500" rx=".7" fill="#999"/></g></svg></div>
<div class="sep" style="left:999px;top:86px"></div>
<div class="b d" style="left:1003px;top:81px"><svg viewBox="0.2 0.6 24 24"><rect x="14.300" y="3.900" width="6.900" height="5.100" rx="1" fill="#9a9a9a" stroke="#888" stroke-width=".4"/><rect x="2" y="13.300" width="7" height="5" rx="1" fill="#9a9a9a" stroke="#888" stroke-width=".4"/><rect x="6.2" y="6.7" width="11.6" height="8.5" fill="#f4f4f4" stroke="#aaa" stroke-width=".6"/></svg></div>
<div class="b d" style="left:1033px;top:81px"><svg viewBox="0.2 0.6 24 24"><rect x="14.300" y="3.900" width="6.900" height="5.100" rx="1" fill="#9a9a9a" stroke="#888" stroke-width=".4"/><rect x="2" y="13.300" width="7" height="5" rx="1" fill="#9a9a9a" stroke="#888" stroke-width=".4"/><rect x="5.8" y="8.2" width="11.2" height="7.5" fill="#f4f4f4" stroke="#aaa" stroke-width=".6"/><rect x="14.300" y="3.900" width="6.900" height="5.100" rx="1" fill="#9a9a9a" stroke="#888" stroke-width=".4"/></svg></div>
<div class="sep" style="left:1066px;top:86px"></div>
<div class="b " style="left:1070px;top:81px"><svg viewBox="0.2 0.6 24 24"><circle cx="5.4" cy="3.400" r="2" fill="#fff" stroke="#111" stroke-width=".8"/><path d="M2.0000000000000004 6.300h6.800v8h-1.500v7.400h-1.700v-7h-.4v7h-1.700v-7.400h-1.500z" fill="#fff" stroke="#111" stroke-width=".8" stroke-linejoin="round"/><circle cx="17.5" cy="3.400" r="2" fill="#fff" stroke="#111" stroke-width=".8"/><path d="M14.1 6.300h6.800v8h-1.500v7.400h-1.700v-7h-.4v7h-1.700v-7.400h-1.500z" fill="#fff" stroke="#111" stroke-width=".8" stroke-linejoin="round"/></svg></div>
<div class="b " style="left:1100px;top:81px"><svg viewBox="0.2 0.6 24 24"><text x="12.200" y="9.500" text-anchor="middle" font-family="Liberation Sans" font-size="8.500" fill="#111" textLength="17" lengthAdjust="spacingAndGlyphs">0.00</text><path d="M6.600 15.200H16.900" stroke="#333" stroke-width="1.300"/><path d="M1.800 12.200l3.200 3-3.200 3M22 12.200l-3.200 3 3.200 3" fill="none" stroke="#4a5ae0" stroke-width=".8"/></svg></div>
<div class="sep" style="left:1133px;top:86px"></div>
<div class="b d" style="left:1137px;top:81px"><svg viewBox="0.2 0.6 24 24"><rect x="3.300" y="2" width="14" height="4.500" rx="1.800" fill="#c8c8c8" stroke="#aaa" stroke-width=".5"/><path d="M17.300 4.300h2.700v6h-9.300v2.500" fill="none" stroke="#aaa" stroke-width="1.100"/><rect x="8.900" y="12.400" width="3.700" height="9.300" rx="1.700" fill="#8a8a8a" stroke="#777" stroke-width=".4"/></svg></div>
<div class="h" style="left:0px;top:122px"></div>
<div class="b " style="left:6px;top:118px"><svg viewBox="0.2 0.6 24 24"><path d="M3.700 17.300L19.400 6.600" stroke="#222" stroke-width="1" fill="none" /><circle cx="3.7" cy="17.3" r="1.5" fill="#e8161b"/><circle cx="19.4" cy="6.6" r="1.5" fill="#e8161b"/></svg></div>
<div class="b " style="left:36px;top:118px"><svg viewBox="0.2 0.6 24 24"><path d="M4.300 16.300H21.200" stroke="#8aa2e6" stroke-width="1.5" fill="none" /><path d="M4.300 16.300L20.100 6.200" stroke="#222" stroke-width="1" fill="none" /><path d="M16.900 16.300A12.600 12.600 0 0 0 14.900 9.500" stroke="#e8584a" stroke-width="0.8" fill="none" /><circle cx="4.3" cy="16.3" r="1.5" fill="#e8161b"/></svg></div>
<div class="b " style="left:66px;top:118px"><svg viewBox="0.2 0.6 24 24"><path d="M4.300 10.900H19.800" stroke="#222" stroke-width="1.1" fill="none" /><circle cx="4.3" cy="10.9" r="1.5" fill="#e8161b"/></svg></div>
<div class="b " style="left:96px;top:118px"><svg viewBox="0.2 0.6 24 24"><path d="M10.900 2.900V18.500" stroke="#222" stroke-width="1.1" fill="none" /><circle cx="10.9" cy="18.5" r="1.5" fill="#e8161b"/></svg></div>
<div class="sep" style="left:129px;top:123px"></div>
<div class="b " style="left:133px;top:118px"><svg viewBox="0.2 0.6 24 24"><path d="M12.700 3.200L1.400 19H20.400" stroke="#e8161b" stroke-width="1" fill="none" /><path d="M1.400 19L19.200 9.600" stroke="#111" stroke-width="1" fill="none" /><path d="M11.500 5A17 17 0 0 1 15.800 11.500A16 16 0 0 1 16 19" stroke="#3a4ae0" stroke-width="0.8" fill="none" /><path d="M14.200 5.300h3.600M14.200 6.700h3.600M18 13.200h3.600M18 14.600h3.600" stroke="#2a3ae8" stroke-width="1"/></svg></div>
<div class="sep" style="left:166px;top:123px"></div>
<div class="b " style="left:170px;top:118px"><svg viewBox="0.2 0.6 24 24"><path d="M1.500 12.100L17.500 4.700" stroke="#e8161b" stroke-width="1" fill="none" /><path d="M5.700 19L21.300 11.100" stroke="#111" stroke-width="1" fill="none" /><path d="M7.200 9.600L10.900 17" stroke="#3a4ae0" stroke-width="0.9" fill="none" /></svg></div>
<div class="sep" style="left:203px;top:123px"></div>
<div class="b " style="left:207px;top:118px"><svg viewBox="0.2 0.6 24 24"><circle cx="7.3" cy="14.1" r="5.5" fill="none" stroke="#e8161b" stroke-width="0.9"/><path d="M6.100 8.900L19.900 5.900" stroke="#111" stroke-width="1" fill="none" /><circle cx="19.9" cy="5.9" r="1.5" fill="#e8161b"/></svg></div>
<div class="b " style="left:237px;top:118px"><svg viewBox="0.2 0.6 24 24"><circle cx="7.3" cy="14.1" r="5.5" fill="none" stroke="#e8161b" stroke-width="0.9"/><path d="M6.200 8.900L19.100 6.200" stroke="#111" stroke-width="1" fill="none" /><circle cx="19.4" cy="8.9" r="2.1" fill="none" stroke="#e8161b" stroke-width="0.9"/></svg></div>
<div class="b " style="left:267px;top:118px"><svg viewBox="0.2 0.6 24 24"><circle cx="8.5" cy="15.1" r="5.5" fill="none" stroke="#e8161b" stroke-width="0.9"/><path d="M5.500 10.800L17.400 4.100" stroke="#111" stroke-width="1" fill="none" /><path d="M15.100 1.100L21.800 11.500" stroke="#e8161b" stroke-width="1" fill="none" /></svg></div>
<div class="sep" style="left:300px;top:123px"></div>
<div class="b " style="left:304px;top:118px"><svg viewBox="0.2 0.6 24 24"><path d="M1.600 20L21.200 3.700M9.600 19.300L13.500 3.700" stroke="#111" stroke-width="1" fill="none" /><path d="M13.500 4.700L16.700 7.100" stroke="#e8161b" stroke-width="0.8" fill="none" /><circle cx="11.5" cy="11.4" r="1.5" fill="#e8161b"/></svg></div>
<div class="b " style="left:334px;top:118px"><svg viewBox="0.2 0.6 24 24"><path d="M1.600 20L21.200 3.700M6.800 5.900L16.400 16.300" stroke="#111" stroke-width="1" fill="none" /><circle cx="11.5" cy="11.4" r="1.5" fill="#e8161b"/></svg></div>
<div class="h" style="left:372px;top:122px"></div>
<div class="b " style="left:380px;top:118px"><svg viewBox="0.2 0.6 24 24"><circle cx="11" cy="11.8" r="8.2" fill="none" stroke="#222" stroke-width="1"/><circle cx="11" cy="11.8" r="1.5" fill="#e8161b"/><circle cx="15.7" cy="5.2" r="1.5" fill="#e8161b"/></svg></div>
<div class="sep" style="left:413px;top:123px"></div>
<div class="b " style="left:417px;top:118px"><svg viewBox="0.2 0.6 24 24"><rect x="2.700" y="3.200" width="17" height="16.800" fill="none" stroke="#8a9ae0" stroke-width=".6"/><circle cx="11.3" cy="11.8" r="8.5" fill="none" stroke="#222" stroke-width="1"/><path d="M11.300 11.800L16.900 5.600" stroke="#e8161b" stroke-width="0.7" fill="none" /><circle cx="11.3" cy="11.8" r="1.5" fill="#e8161b"/></svg></div>
<div class="b " style="left:447px;top:118px"><svg viewBox="0.2 0.6 24 24"><rect x="2.700" y="3.200" width="17" height="16.800" fill="none" stroke="#8a9ae0" stroke-width=".6"/><circle cx="11.3" cy="11.8" r="8.5" fill="none" stroke="#222" stroke-width="1"/><path d="M5.800 17.800L16.900 5.600" stroke="#e8161b" stroke-width="0.7" fill="none" /><circle cx="11.3" cy="11.8" r="1.5" fill="#e8161b"/></svg></div>
<div class="sep" style="left:480px;top:123px"></div>
<div class="b " style="left:484px;top:118px"><svg viewBox="0.2 0.6 24 24"><circle cx="11.4" cy="11.1" r="8.5" fill="none" stroke="#222" stroke-width="1"/><path d="M11.400 11.100L16.700 5.200" stroke="#e8584a" stroke-width="0.7" fill="none" /><circle cx="4.4" cy="15.5" r="1.5" fill="#e8161b"/><circle cx="15.6" cy="18.5" r="1.5" fill="#e8161b"/></svg></div>
<div class="sep" style="left:517px;top:123px"></div>
<div class="b " style="left:521px;top:118px"><svg viewBox="0.2 0.6 24 24"><circle cx="11.7" cy="11.1" r="8.5" fill="none" stroke="#222" stroke-width="1"/><path d="M4.200 15.500L18.600 7.400" stroke="#2a4ae8" stroke-width="0.9" fill="none" /><circle cx="4.2" cy="15.5" r="1.5" fill="#e8161b"/><circle cx="18.6" cy="7.4" r="1.5" fill="#e8161b"/></svg></div>
<div class="b " style="left:551px;top:118px"><svg viewBox="0.2 0.6 24 24"><circle cx="11.7" cy="11.1" r="8.5" fill="none" stroke="#222" stroke-width="1"/><circle cx="8.7" cy="3.7" r="1.5" fill="#e8161b"/><circle cx="4.2" cy="15.5" r="1.5" fill="#e8161b"/><circle cx="15.7" cy="18.5" r="1.5" fill="#e8161b"/></svg></div>
<div class="sep" style="left:584px;top:123px"></div>
<div class="b " style="left:588px;top:118px"><svg viewBox="0.2 0.6 24 24"><circle cx="12.2" cy="10.1" r="7.4" fill="none" stroke="#222" stroke-width="1"/><path d="M1.200 3.700L7 20.800M3.200 2.600L5.200 11.800M4 20.800L7 14.100M1 7.500L5 12" stroke="#e8161b" stroke-width="0.8" fill="none" /><circle cx="14.7" cy="2.9" r="1.5" fill="#e8161b"/><circle cx="18.7" cy="13.6" r="1.5" fill="#e8161b"/></svg></div>
<div class="b " style="left:618px;top:118px"><svg viewBox="0.2 0.6 24 24"><circle cx="12.2" cy="10.1" r="7.4" fill="none" stroke="#222" stroke-width="1"/><path d="M1.200 3.700L7 20.800M3.200 2.600L5.200 11.800M4 20.800L7 14.100M1 7.500L5 12" stroke="#e8161b" stroke-width="0.8" fill="none" /><path d="M12.200 10.100L15.200 3.700" stroke="#e8584a" stroke-width="0.7" fill="none" /><circle cx="18.6" cy="13.6" r="1.5" fill="#e8161b"/></svg></div>
<div class="b " style="left:648px;top:118px"><svg viewBox="0.2 0.6 24 24"><circle cx="11.9" cy="10.1" r="7.4" fill="none" stroke="#222" stroke-width="1"/><path d="M1.200 3.700L7 20.800M3.200 2.600L5.200 11.800M4 20.800L7 14.100M1 7.500L5 12" stroke="#e8161b" stroke-width="0.8" fill="none" /><path d="M9.700 21.500L22.300 13.300M9 19L12 21.800" stroke="#e8161b" stroke-width="0.8" fill="none" /><circle cx="14.4" cy="2.9" r="1.5" fill="#e8161b"/></svg></div>
<div class="b " style="left:678px;top:118px"><svg viewBox="0.2 0.6 24 24"><circle cx="13.1" cy="10.1" r="7.1" fill="none" stroke="#222" stroke-width="1"/><path d="M13.100 10.100L17.500 4.700" stroke="#e8584a" stroke-width="0.7" fill="none" /><path d="M.5 5.900L10.900 22.200M13.900 22.200L23 9.600M8.500 16L9.500 22.500M15 17.500L13 22.500M1 10L6.500 11.500" stroke="#e8161b" stroke-width="0.8" fill="none" /></svg></div>
<div class="b " style="left:708px;top:118px"><svg viewBox="0.2 0.6 24 24"><circle cx="12" cy="11.1" r="6.2" fill="none" stroke="#222" stroke-width="1"/><path d="M3.100 5.600L18 1.400M1.600 7.400L9.800 22.200M12 21.500L21.700 11.100M3.500 1.800L17.500 4.500M7.500 17L8 22.500M14.500 18L14 22.500M2 12L6 12.800" stroke="#e8161b" stroke-width="0.8" fill="none" /></svg></div>
<div class="h" style="left:746px;top:122px"></div>
<div class="b " style="left:754px;top:118px"><svg viewBox="0.2 0.6 24 24"><path d="M1.700 11.100C5 6 11 2.500 18 2.200" stroke="#222" stroke-width="1" fill="none" /><path d="M18 1.700V5.200M1.700 11.100L5 13" stroke="#e8161b" stroke-width="0.8" fill="none" /><circle cx="17.7" cy="20" r="1.5" fill="#e8161b"/></svg></div>
<div class="sep" style="left:787px;top:123px"></div>
<div class="b " style="left:791px;top:118px"><svg viewBox="0.2 0.6 24 24"><path d="M2.900 18.500A15.600 15.900 0 0 1 18.500 2.600" stroke="#111" stroke-width="1.1" fill="none" /><path d="M7.800 6.600L19 19" stroke="#e8584a" stroke-width="0.8" fill="none" /><circle cx="2.9" cy="18.5" r="1.5" fill="#e8161b"/><circle cx="18.5" cy="2.6" r="1.5" fill="#e8161b"/></svg></div>
<div class="b " style="left:821px;top:118px"><svg viewBox="0.2 0.6 24 24"><path d="M18.700 2.600V18.500H2.800" stroke="#a9b9d9" stroke-width="1.2" fill="none" /><path d="M2.800 18.500A15.900 15.900 0 0 1 18.700 2.600" stroke="#111" stroke-width="1.1" fill="none" /><path d="M12 18.500A6.700 6.700 0 0 1 18.700 11.800" stroke="#e8584a" stroke-width="0.8" fill="none" /><circle cx="2.8" cy="18.5" r="1.5" fill="#e8161b"/><circle cx="18.7" cy="2.6" r="1.5" fill="#e8161b"/></svg></div>
<div class="b " style="left:851px;top:118px"><svg viewBox="0.2 0.6 24 24"><path d="M19.100 3.700V8M7.500 19.600H11" stroke="#a9b9d9" stroke-width="1.2" fill="none" /><path d="M3.500 19.600A15.600 15.900 0 0 1 19.100 3.700" stroke="#111" stroke-width="1.1" fill="none" /><path d="M7.500 19.600A11.600 12.200 0 0 1 19.100 7.400" stroke="#e8584a" stroke-width="0.9" fill="none" /><circle cx="3.5" cy="19.6" r="1.5" fill="#e8161b"/><circle cx="19.1" cy="3.7" r="1.5" fill="#e8161b"/></svg></div>
<div class="b " style="left:881px;top:118px"><svg viewBox="0.2 0.6 24 24"><path d="M2.200 17.500H20.300" stroke="#a9b9d9" stroke-width="1.1" fill="none" stroke-dasharray="3 2"/><path d="M11.300 4V17.500" stroke="#e0907a" stroke-width="1" fill="none" /><path d="M2.200 17.500V12.800A9.050 9.050 0 0 1 20.300 12.800V17.500" stroke="#111" stroke-width="1.1" fill="none" /><circle cx="2.2" cy="17.5" r="1.5" fill="#e8161b"/><circle cx="20.3" cy="17.5" r="1.5" fill="#e8161b"/></svg></div>
<div class="sep" style="left:914px;top:123px"></div>
<div class="b " style="left:918px;top:118px"><svg viewBox="0.2 0.6 24 24"><path d="M4.100 19.300A10.600 10.600 0 0 1 20.100 5.200" stroke="#111" stroke-width="1.1" fill="none" /><circle cx="4.1" cy="19.3" r="1.5" fill="#e8161b"/><circle cx="8.2" cy="4.4" r="1.5" fill="#e8161b"/><circle cx="20.1" cy="5.2" r="1.5" fill="#e8161b"/></svg></div>
<div class="sep" style="left:951px;top:123px"></div>
<div class="b " style="left:955px;top:118px"><svg viewBox="0.2 0.6 24 24"><path d="M1.500 14.500L13.100 8.600" stroke="#e8161b" stroke-width="1" fill="none" /><path d="M13.100 8.600C16 7 19 10 19.300 14.800" stroke="#111" stroke-width="1" fill="none" /><path d="M14.300 13L18.300 14.800" stroke="#e8161b" stroke-width="0.8" fill="none" /><circle cx="19.3" cy="14.8" r="1.5" fill="#e8161b"/></svg></div>
<div class="b " style="left:985px;top:118px"><svg viewBox="0.2 0.6 24 24"><path d="M2.800 .7V23" stroke="#e8161b" stroke-width="1" fill="none" /><path d="M2.800 19.300A16 16.700 0 0 1 18.700 2.600" stroke="#111" stroke-width="1.1" fill="none" /><path d="M7.600 6.200L19 18.500" stroke="#e8584a" stroke-width="0.8" fill="none" /><circle cx="18.7" cy="2.6" r="1.5" fill="#e8161b"/></svg></div>
<div class="b " style="left:276.5px;top:155px"><svg viewBox="0.2 0.6 24 24"><rect x="2.200" y=".6" width="11.900" height="4.700" fill="#000"/><path d="M6.200 5.200h4.400l-.6 9.300h-3.200z" fill="#fff"/><path d="M6.200 5.200h4.400l-.6 9.300h-3.200z" fill="url(#hat2)"/><path d="M2.200 17.200h4.300v1.600h3.900v-1.600h3.700v5h-11.900z" fill="#000"/><path d="M22.57 13.02L22.57 14.16L20.91 14.84L20.59 15.62L21.29 17.27L20.49 18.08L18.83 17.38L18.05 17.70L17.38 19.37L16.24 19.37L15.56 17.71L14.78 17.39L13.13 18.09L12.32 17.29L13.02 15.63L12.70 14.85L11.03 14.18L11.03 13.04L12.69 12.36L13.01 11.58L12.31 9.93L13.11 9.12L14.77 9.82L15.55 9.50L16.22 7.83L17.36 7.83L18.04 9.49L18.82 9.81L20.47 9.11L21.28 9.91L20.58 11.57L20.90 12.35z" fill="#8f8f8f" stroke="#7a7a7a" stroke-width=".3"/><circle cx="16.8" cy="13.6" r="1.91" fill="#d4e6d4"/></svg></div>
<div class="b " style="left:306.5px;top:155px"><svg viewBox="0.2 0.6 24 24"><rect x="2.200" y=".6" width="11.900" height="4.700" fill="#000"/><path d="M6.200 5.200h4.400l-.6 9.300h-3.200z" fill="#fff"/><path d="M6.200 5.200h4.400l-.6 9.300h-3.200z" fill="url(#hat2)"/><path d="M2.200 17.200h4.300v1.600h3.900v-1.600h3.700v5h-11.900z" fill="#000"/><path d="M12.300 12.200h5v-2.600l5 4-5 4v-2.600h-5z" fill="#f01818" stroke="#a00" stroke-width=".3"/></svg></div>
<div class="sep" style="left:339.5px;top:160px"></div>
<div class="b " style="left:343.5px;top:155px"><svg viewBox="0.2 0.6 24 24"><rect x="2.200" y=".6" width="11.900" height="4.700" fill="#000"/><path d="M6.200 5.200h4.400l-.6 9.300h-3.200z" fill="#fff"/><path d="M6.200 5.200h4.400l-.6 9.300h-3.200z" fill="url(#hat2)"/><path d="M2.200 17.200h4.300v1.600h3.900v-1.600h3.700v5h-11.900z" fill="#000"/><path d="M22.300 12.200h-5v-2.600l-5 4 5 4v-2.600h5z" fill="#4be04b" stroke="#2a9a2a" stroke-width=".4"/></svg></div>
<div class="sep" style="left:376.5px;top:160px"></div>
<div class="b c" style="left:380px;top:155px"><svg viewBox="0.2 0.6 24 24"><rect x="2.200" y=".6" width="11.900" height="4.700" fill="#000"/><path d="M6.200 5.200h4.400l-.6 9.300h-3.200z" fill="#fff"/><path d="M6.200 5.200h4.400l-.6 9.300h-3.200z" fill="url(#hat2)"/><path d="M2.200 17.200h4.300v1.600h3.900v-1.600h3.700v5h-11.900z" fill="#000"/><circle cx="15.800" cy="12.500" r="3.700" fill="#8c8c8c"/><path d="M19.400 9.200l3.400 2-.2 4-3.400 2.200-3.400-2.200 0-4z" fill="#111"/><circle cx="19.200" cy="13.300" r="2.300" fill="#9a9a9a"/><path d="M17.800 13.300l1.200 1.300 2.500-3" stroke="#111" stroke-width="1.100" fill="none"/></svg></div>
<div class="sep" style="left:413px;top:160px"></div>
<div class="b d" style="left:417px;top:155px"><svg viewBox="0.2 0.6 24 24"><path d="M0 10.800L11 3.700L22.400 10.400L11 17.500z" fill="#a8a8a8"/><path d="M0 10.800L11 17.500V19.400L0 12.700z" fill="#9a9a9a"/><path d="M11 17.500L22.400 10.400V12.300L11 19.400z" fill="#b4b4b4"/><path d="M3.500 10.800L11 6L18.800 10.500L11 15.300z" fill="none" stroke="#bcbcbc" stroke-width=".7"/><path d="M11 6L14.500 12.800" stroke="#b8b8b8" stroke-width=".6"/></svg></div>
<div class="b d" style="left:447px;top:155px"><svg viewBox="0.2 0.6 24 24"><path d="M0 10.800L11 3.700L22.400 10.400L11 17.500z" fill="#a8a8a8"/><path d="M0 10.800L11 17.500V19.400L0 12.700z" fill="#9a9a9a"/><path d="M11 17.500L22.400 10.400V12.300L11 19.400z" fill="#b4b4b4"/><ellipse cx="9.700" cy="8" rx="1.300" ry=".8" fill="#909090"/><ellipse cx="15.300" cy="10" rx="1.300" ry=".8" fill="#909090"/><ellipse cx="9.800" cy="12" rx="1.300" ry=".8" fill="#909090"/></svg></div>
<div class="sep" style="left:480px;top:160px"></div>
<div class="b " style="left:484px;top:155px"><svg viewBox="0.2 0.6 24 24"><path d="M-.2 7.300L11.100 .7L15.700 3.500L4.400 10.600z" fill="#4a6fb0"/><path d="M-.2 7.300L4.400 10.600V12L-.2 8.600z" fill="#3a5a96"/><path d="M4.400 10.600L15.700 3.500V4.900L4.400 12z" fill="#6a8fd0"/><path d="M6.900 11.900L18.600 4.600L22.800 7.300L11.500 14.600z" fill="#4a6fb0"/><path d="M6.900 11.900L11.500 14.600V16L6.900 13.200z" fill="#3a5a96"/><path d="M11.500 14.600L22.800 7.300V8.700L11.500 16z" fill="#6a8fd0"/><rect x="14.500" y="14.600" width="7.900" height="7.800" fill="#000"/><path d="M16 16.300h4.900M18.450 16.300v5" stroke="#fff" stroke-width="1.300"/></svg></div>
<div class="sep" style="left:517px;top:160px"></div>
<div class="b d" style="left:521px;top:155px"><svg viewBox="0.2 0.6 24 24"><rect x=".9" y="1.200" width="20.900" height="20.700" fill="#fff" stroke="#bbb" stroke-width=".5"/><path d="M2.200 2.500L9 7.200H2.200z" fill="#c8c8c8"/><path d="M2.200 8.700h7v3h-3.500v6.500h9v3h-12.500z" fill="#a4a4a4"/><rect x="11.500" y="4.800" width="4.500" height="8.300" fill="#a8a8a8"/><path d="M6.700 13.500L17.500 16.500H6.700z" fill="#c0c0c0" stroke="#aaa" stroke-width=".4"/></svg></div>
<div class="b d" style="left:551px;top:155px"><svg viewBox="0.2 0.6 24 24"><rect x="5.400" y="4.700" width="11.600" height="13.500" fill="#f4f4f4" stroke="#909090" stroke-width=".8"/><text x="11.200" y="16" text-anchor="middle" font-family="Liberation Sans" font-size="12.500" fill="#555">N</text></svg></div>
<div class="a" style="left:6px;top:160px;width:268px;height:19px;border:1px solid #2f6e2f;border-radius:3px;background:linear-gradient(#4f934f,#8cc08c 50%,#c4e4c4)"></div>
<div class="a" style="left:258px;top:161px;width:15px;height:17px;border:1px solid #7f8f7f;border-radius:2px;background:linear-gradient(#d4e8d4,#c0dcc0)"></div>
<svg class="a" style="left:261px;top:166px" width="9" height="6"><path d="M0.5 0.5h8l-4 4.5z" fill="#5f8f5f"/></svg>
<div class="a" style="left:59px;top:189px;width:1px;height:795px;background:#94ad94"></div>
<div class="a" style="left:60px;top:189px;width:1px;height:795px;background:#d6ecd6"></div>
<div class="a" style="left:19px;top:193px;width:19px;height:5px;background-image:radial-gradient(circle,#e6f4e6 0.7px,transparent 0.9px),radial-gradient(circle,#9dbf9d 0.7px,transparent 0.9px);background-size:3px 3px,3px 3px;background-position:0 0,1px 1px"></div>
<div class="b " style="left:-3px;top:211px"><svg viewBox="0.5 0.6 24 24"><path d="M4.699999999999999 5.9H9.5M7.1 3.5000000000000004V8.3" stroke="#111" stroke-width="1"/><path d="M16.6 13.5H21.4M19 11.1V15.9" stroke="#111" stroke-width="1"/><path d="M5.199999999999999 19H10.0M7.6 16.6V21.4" stroke="#111" stroke-width="1"/></svg></div>
<svg class="a" style="left:19px;top:233px" width="4" height="4"><path d="M4 0v4h-4z" fill="#111"/></svg>
<div class="b " style="left:27px;top:211px"><svg viewBox="0.2 0.6 24 24"><path d="M2.200 17.900L22.600 8" stroke="#222" stroke-width="1" fill="none" /></svg></div>
<svg class="a" style="left:49px;top:233px" width="4" height="4"><path d="M4 0v4h-4z" fill="#111"/></svg>
<div class="b " style="left:-3px;top:241px"><svg viewBox="0.5 0.6 24 24"><path d="M4 20.800A16.900 16.900 0 0 1 20.900 3.900" stroke="#222" stroke-width="1" fill="none" /></svg></div>
<svg class="a" style="left:19px;top:263px" width="4" height="4"><path d="M4 0v4h-4z" fill="#111"/></svg>
<div class="b " style="left:27px;top:241px"><svg viewBox="0.2 0.6 24 24"><circle cx="11.6" cy="12" r="8.3" fill="none" stroke="#222" stroke-width="1"/></svg></div>
<svg class="a" style="left:49px;top:263px" width="4" height="4"><path d="M4 0v4h-4z" fill="#111"/></svg>
<div class="b " style="left:-3px;top:271px"><svg viewBox="0.5 0.6 24 24"><ellipse cx="12.300" cy="12.300" rx="11.300" ry="4.400" transform="rotate(-45 12.300 12.300)" fill="none" stroke="#222" stroke-width="1"/></svg></div>
<svg class="a" style="left:19px;top:293px" width="4" height="4"><path d="M4 0v4h-4z" fill="#111"/></svg>
<div class="b " style="left:27px;top:271px"><svg viewBox="0.2 0.6 24 24"><path d="M2.600 5.500C4 9 5.500 19.500 8 19.300C11 19 13 6 17.500 5.200C20.500 4.700 21.500 10.500 20.800 13.500C20 17 17 16 15 13.500C11 9 5 3 2.600 5.500z" stroke="#222" stroke-width="1" fill="none" /></svg></div>
<svg class="a" style="left:49px;top:293px" width="4" height="4"><path d="M4 0v4h-4z" fill="#111"/></svg>
<div class="b " style="left:-3px;top:301px"><svg viewBox="0.5 0.6 24 24"><path d="M8.300 8.200C5.500 8.200 4.500 10.500 4.500 12.500C4.500 14.500 6 16.100 8.300 16.100H20.600" stroke="#222" stroke-width="1" fill="none" /></svg></div>
<svg class="a" style="left:19px;top:323px" width="4" height="4"><path d="M4 0v4h-4z" fill="#111"/></svg>
<div class="b " style="left:27px;top:301px"><svg viewBox="0.2 0.6 24 24"><path d="M1.400 7.400L4.300 2.400H10.100L13 7.400L10.100 12.400H4.300z" stroke="#222" stroke-width="1" fill="none" /><path d="M14.700 13.700L18.700 6.700L22.600 13.700z" stroke="#222" stroke-width="1" fill="none" /><rect x="1.400" y="16.900" width="12.200" height="5.500" fill="none" stroke="#222" stroke-width="1"/></svg></div>
<svg class="a" style="left:49px;top:323px" width="4" height="4"><path d="M4 0v4h-4z" fill="#111"/></svg>
<div class="b " style="left:-3px;top:331px"><svg viewBox="0.5 0.6 24 24"><path d="M4 18.300V12.800L9.100 6.800H21.200V18.300z" fill="url(#hat3)" stroke="#222" stroke-width="1"/><circle cx="14.600" cy="12.800" r="2.200" fill="#9fc89f" stroke="#222" stroke-width=".9"/></svg></div>
<svg class="a" style="left:19px;top:353px" width="4" height="4"><path d="M4 0v4h-4z" fill="#111"/></svg>
<div class="b " style="left:-3px;top:369px"><svg viewBox="0.5 0.6 24 24"><text x="12.500" y="20.400" text-anchor="middle" font-family="Liberation Serif" font-size="22.500" fill="#000">A</text></svg></div>
<div class="b " style="left:27px;top:369px"><svg viewBox="0.2 0.6 24 24"><path d="M3.700 5.400V19.500M19.900 5.400V19.500" stroke="#222" stroke-width="1.2" fill="none" /><path d="M5 7H18.500" stroke="#111" stroke-width="1" fill="none" /><path d="M3.700 7l3.200-1.500v3zM19.900 7l-3.200-1.500v3z" fill="#111"/></svg></div>
<svg class="a" style="left:49px;top:391px" width="4" height="4"><path d="M4 0v4h-4z" fill="#111"/></svg>
<div class="b " style="left:-3px;top:399px"><svg viewBox="0.5 0.6 24 24"><rect x="2.900" y="5.200" width="19.300" height="14.600" fill="#fff" stroke="#111" stroke-width="1"/><path d="M5 17.500l4.500-6 3.200 3.500 2.500-2.500 4.800 5z" fill="#000"/><circle cx="18.200" cy="8.500" r="1.400" fill="#000"/></svg></div>
<div class="b " style="left:-3px;top:437px"><svg viewBox="0.5 0.6 24 24"><path d="M1.800 6.800V22.500H17z" fill="#fff" stroke="#222" stroke-width="1"/><path d="M4.500 14.500V19.800H10z" fill="#9ac09a" stroke="#333" stroke-width=".8"/><g transform="translate(5.800 1.800) rotate(-45)"><rect x="-1.700" y="0" width="3.400" height="9" fill="#e3241b" stroke="#a01010" stroke-width=".3"/><rect x="-1.700" y="1.500" width="3.400" height="1.300" fill="#ddd"/></g><path d="M19.400 1.800V4M19.400 4L17.200 16.500M19.400 4L21.600 16.500" stroke="#111" stroke-width="1" fill="none"/></svg></div>
<svg class="a" style="left:19px;top:459px" width="4" height="4"><path d="M4 0v4h-4z" fill="#111"/></svg>
<div class="b " style="left:27px;top:437px"><svg viewBox="0.2 0.6 24 24"><rect x="2.200" y="8.300" width="19.900" height="7.100" fill="#f8f8f8" stroke="#999" stroke-width=".6"/><path d="M4.500 8.500v3M7 8.500v2M9.500 8.500v3M12 8.500v2M14.500 8.500v3M17 8.500v2M19.500 8.500v3" stroke="#888" stroke-width=".7"/></svg></div>
<div class="b d" style="left:-3px;top:467px"><svg viewBox="0.5 0.6 24 24"><rect x="4" y="4.200" width="13.800" height="10.200" fill="#e9e9e9" fill-opacity=".5" stroke="#999" stroke-width=".8"/><circle cx="15.700" cy="13.600" r="5.800" fill="none" stroke="#999" stroke-width=".8"/><path d="M2.500 14.400H6" stroke="#aaa" stroke-width=".7"/></svg></div>
<div class="b " style="left:27px;top:467px"><svg viewBox="0.2 0.6 24 24"><path d="M2.200 11.600L17.100 2.700" stroke="#e8161b" stroke-width="1.1" fill="none" /><g transform="translate(7.800 5.500) scale(.8)"><path d="M3.800 3.800v13.400l3.200-2.700 2.600 5.300 2.200-1.100-2.600-5.100 4.100-.5z" fill="#eee" stroke="#8f8f8f" stroke-width="1.200" stroke-linejoin="round"/></g></svg></div>
<svg class="a" style="left:49px;top:489px" width="4" height="4"><path d="M4 0v4h-4z" fill="#111"/></svg>
<div class="b " style="left:-3px;top:505px"><svg viewBox="0.5 0.6 24 24"><path d="M4 10.500L13.800 2.900L21.700 7.100L11.200 14zM4 10.500V18L11.200 21.700L21.700 14.600V7.100M11.200 14V21.700" stroke="#222" stroke-width="1" fill="none" /></svg></div>
<svg class="a" style="left:19px;top:527px" width="4" height="4"><path d="M4 0v4h-4z" fill="#111"/></svg>
<div class="b " style="left:-3px;top:543px"><svg viewBox="0.5 0.6 24 24"><rect x="1.800" y="2.100" width="17.200" height="16.500" fill="url(#hat4)"/><rect x="8.300" y="9.100" width="13.400" height="13.900" rx="1" fill="#3b6cf0" stroke="#2a4ad0" stroke-width=".5"/><rect x="10" y="9.800" width="9.500" height="6.500" fill="#fff"/><rect x="11.500" y="18.500" width="6.500" height="4" fill="#e6e6ec"/><path d="M4 11.500c3-1.500 5.500-1 7 1.200l1.500-1.500v5h-5l1.700-1.700c-1.200-1.700-3-2.300-5.200-3z" fill="#3aa84a"/><g transform="translate(21.5 9.5) rotate(45) scale(0.9)"><rect x="-1.500" y="0" width="3" height="10" fill="#f5a623" stroke="#b56a00" stroke-width=".4"/><rect x="-.4" y="0" width=".9" height="10" fill="#ffd070"/><path d="M-1.500 10l1.500 3.200 1.500-3.200z" fill="#e8c9a0" stroke="#a67" stroke-width=".3"/><path d="M-.5 12l.5 1.200 .5-1.200z" fill="#222"/><rect x="-1.500" y="-1.800" width="3" height="2" fill="#e3241b" stroke="#a01010" stroke-width=".3"/></g></svg></div>
<div class="b d" style="left:-3px;top:581px"><svg viewBox="0.5 0.6 24 24"><path d="M2.100 12L9.900 21.400L16.200 2.500C22.500 8 22.500 16 16.200 21.400" stroke="#999" stroke-width="0.9" fill="none" /></svg></div>
<div class="a" style="left:61px;top:188px;width:1465px;height:36px;background:linear-gradient(#c8e5c8,#c2dfc2 32px);border:1px solid #8ea58e;border-radius:4px 4px 0 0;box-shadow:inset 1px 1px 0 #d8eed8"></div>
<svg class="a" style="left:1497px;top:198px" width="12" height="12"><path d="M2 2l8 8M10 2l-8 8" stroke="#777" stroke-width="2.4" stroke-linecap="round"/><path d="M2 2l8 8M10 2l-8 8" stroke="#c4c4c4" stroke-width="0.9" stroke-linecap="round"/></svg>
<svg class="a" style="left:74px;top:196px" width="16" height="16" viewBox="0 0 16 16"><circle cx="7" cy="7" r="5.2" fill="#fff" stroke="#2a3f8f" stroke-width="2"/><path d="M7 3v8M3 7h8" stroke="#999" stroke-width=".6"/><path d="M7 7l6 6" stroke="#e8a020" stroke-width="1.8" stroke-linecap="round"/><circle cx="7" cy="7" r="1" fill="#c33"/></svg>
<svg class="a" style="left:61px;top:220px" width="1465" height="609" viewBox="61 220 1465 609"><rect x="61" y="220" width="1465" height="609" fill="#222830"/><rect x="274.5" y="244.7" width="1038" height="559.3" fill="#ff00ff"/><path d="M274.5 244.7V804M1312.5 244.7V804" stroke="#fff" stroke-width="1" fill="none"/><rect x="286.60" y="257.00" width="56.6" height="56.8" rx="8.6" fill="#222830" stroke="#fff" stroke-width="0.7" stroke-opacity=".75"/><rect x="355.00" y="257.00" width="56.6" height="56.8" rx="8.6" fill="#222830" stroke="#fff" stroke-width="0.7" stroke-opacity=".75"/><rect x="423.40" y="257.00" width="56.6" height="56.8" rx="8.6" fill="#222830" stroke="#fff" stroke-width="0.7" stroke-opacity=".75"/><rect x="491.80" y="257.00" width="56.6" height="56.8" rx="8.6" fill="#222830" stroke="#fff" stroke-width="0.7" stroke-opacity=".75"/><rect x="560.20" y="257.00" width="56.6" height="56.8" rx="8.6" fill="#222830" stroke="#fff" stroke-width="0.7" stroke-opacity=".75"/><rect x="628.60" y="257.00" width="56.6" height="56.8" rx="8.6" fill="#222830" stroke="#fff" stroke-width="0.7" stroke-opacity=".75"/><rect x="697.00" y="257.00" width="56.6" height="56.8" rx="8.6" fill="#222830" stroke="#fff" stroke-width="0.7" stroke-opacity=".75"/><rect x="765.40" y="257.00" width="56.6" height="56.8" rx="8.6" fill="#222830" stroke="#fff" stroke-width="0.7" stroke-opacity=".75"/><rect x="833.80" y="257.00" width="56.6" height="56.8" rx="8.6" fill="#222830" stroke="#fff" stroke-width="0.7" stroke-opacity=".75"/><rect x="902.20" y="257.00" width="56.6" height="56.8" rx="8.6" fill="#222830" stroke="#fff" stroke-width="0.7" stroke-opacity=".75"/><rect x="970.60" y="257.00" width="56.6" height="56.8" rx="8.6" fill="#222830" stroke="#fff" stroke-width="0.7" stroke-opacity=".75"/><rect x="1039.00" y="257.00" width="56.6" height="56.8" rx="8.6" fill="#222830" stroke="#fff" stroke-width="0.7" stroke-opacity=".75"/><rect x="1107.40" y="257.00" width="56.6" height="56.8" rx="8.6" fill="#222830" stroke="#fff" stroke-width="0.7" stroke-opacity=".75"/><rect x="1175.80" y="257.00" width="56.6" height="56.8" rx="8.6" fill="#222830" stroke="#fff" stroke-width="0.7" stroke-opacity=".75"/><rect x="1244.20" y="257.00" width="56.6" height="56.8" rx="8.6" fill="#222830" stroke="#fff" stroke-width="0.7" stroke-opacity=".75"/><rect x="286.60" y="325.33" width="56.6" height="56.8" rx="8.6" fill="#222830" stroke="#fff" stroke-width="0.7" stroke-opacity=".75"/><rect x="355.00" y="325.33" width="56.6" height="56.8" rx="8.6" fill="#222830" stroke="#fff" stroke-width="0.7" stroke-opacity=".75"/><rect x="423.40" y="325.33" width="56.6" height="56.8" rx="8.6" fill="#222830" stroke="#fff" stroke-width="0.7" stroke-opacity=".75"/><rect x="491.80" y="325.33" width="56.6" height="56.8" rx="8.6" fill="#222830" stroke="#fff" stroke-width="0.7" stroke-opacity=".75"/><rect x="560.20" y="325.33" width="56.6" height="56.8" rx="8.6" fill="#222830" stroke="#fff" stroke-width="0.7" stroke-opacity=".75"/><rect x="628.60" y="325.33" width="56.6" height="56.8" rx="8.6" fill="#222830" stroke="#fff" stroke-width="0.7" stroke-opacity=".75"/><rect x="697.00" y="325.33" width="56.6" height="56.8" rx="8.6" fill="#222830" stroke="#fff" stroke-width="0.7" stroke-opacity=".75"/><rect x="765.40" y="325.33" width="56.6" height="56.8" rx="8.6" fill="#222830" stroke="#fff" stroke-width="0.7" stroke-opacity=".75"/><rect x="833.80" y="325.33" width="56.6" height="56.8" rx="8.6" fill="#222830" stroke="#fff" stroke-width="0.7" stroke-opacity=".75"/><rect x="902.20" y="325.33" width="56.6" height="56.8" rx="8.6" fill="#222830" stroke="#fff" stroke-width="0.7" stroke-opacity=".75"/><rect x="970.60" y="325.33" width="56.6" height="56.8" rx="8.6" fill="#222830" stroke="#fff" stroke-width="0.7" stroke-opacity=".75"/><rect x="1039.00" y="325.33" width="56.6" height="56.8" rx="8.6" fill="#222830" stroke="#fff" stroke-width="0.7" stroke-opacity=".75"/><rect x="1107.40" y="325.33" width="56.6" height="56.8" rx="8.6" fill="#222830" stroke="#fff" stroke-width="0.7" stroke-opacity=".75"/><rect x="1175.80" y="325.33" width="56.6" height="56.8" rx="8.6" fill="#222830" stroke="#fff" stroke-width="0.7" stroke-opacity=".75"/><rect x="1244.20" y="325.33" width="56.6" height="56.8" rx="8.6" fill="#222830" stroke="#fff" stroke-width="0.7" stroke-opacity=".75"/><rect x="286.60" y="393.66" width="56.6" height="56.8" rx="8.6" fill="#222830" stroke="#fff" stroke-width="0.7" stroke-opacity=".75"/><rect x="355.00" y="393.66" width="56.6" height="56.8" rx="8.6" fill="#222830" stroke="#fff" stroke-width="0.7" stroke-opacity=".75"/><rect x="423.40" y="393.66" width="56.6" height="56.8" rx="8.6" fill="#222830" stroke="#fff" stroke-width="0.7" stroke-opacity=".75"/><rect x="491.80" y="393.66" width="56.6" height="56.8" rx="8.6" fill="#222830" stroke="#fff" stroke-width="0.7" stroke-opacity=".75"/><rect x="560.20" y="393.66" width="56.6" height="56.8" rx="8.6" fill="#222830" stroke="#fff" stroke-width="0.7" stroke-opacity=".75"/><rect x="628.60" y="393.66" width="56.6" height="56.8" rx="8.6" fill="#222830" stroke="#fff" stroke-width="0.7" stroke-opacity=".75"/><rect x="697.00" y="393.66" width="56.6" height="56.8" rx="8.6" fill="#222830" stroke="#fff" stroke-width="0.7" stroke-opacity=".75"/><rect x="765.40" y="393.66" width="56.6" height="56.8" rx="8.6" fill="#222830" stroke="#fff" stroke-width="0.7" stroke-opacity=".75"/><rect x="833.80" y="393.66" width="56.6" height="56.8" rx="8.6" fill="#222830" stroke="#fff" stroke-width="0.7" stroke-opacity=".75"/><rect x="902.20" y="393.66" width="56.6" height="56.8" rx="8.6" fill="#222830" stroke="#fff" stroke-width="0.7" stroke-opacity=".75"/><rect x="970.60" y="393.66" width="56.6" height="56.8" rx="8.6" fill="#222830" stroke="#fff" stroke-width="0.7" stroke-opacity=".75"/><rect x="1039.00" y="393.66" width="56.6" height="56.8" rx="8.6" fill="#222830" stroke="#fff" stroke-width="0.7" stroke-opacity=".75"/><rect x="1107.40" y="393.66" width="56.6" height="56.8" rx="8.6" fill="#222830" stroke="#fff" stroke-width="0.7" stroke-opacity=".75"/><rect x="1175.80" y="393.66" width="56.6" height="56.8" rx="8.6" fill="#222830" stroke="#fff" stroke-width="0.7" stroke-opacity=".75"/><rect x="1244.20" y="393.66" width="56.6" height="56.8" rx="8.6" fill="#222830" stroke="#fff" stroke-width="0.7" stroke-opacity=".75"/><rect x="286.60" y="461.99" width="56.6" height="56.8" rx="8.6" fill="#222830" stroke="#fff" stroke-width="0.7" stroke-opacity=".75"/><rect x="355.00" y="461.99" width="56.6" height="56.8" rx="8.6" fill="#222830" stroke="#fff" stroke-width="0.7" stroke-opacity=".75"/><rect x="423.40" y="461.99" width="56.6" height="56.8" rx="8.6" fill="#222830" stroke="#fff" stroke-width="0.7" stroke-opacity=".75"/><rect x="491.80" y="461.99" width="56.6" height="56.8" rx="8.6" fill="#222830" stroke="#fff" stroke-width="0.7" stroke-opacity=".75"/><rect x="560.20" y="461.99" width="56.6" height="56.8" rx="8.6" fill="#222830" stroke="#fff" stroke-width="0.7" stroke-opacity=".75"/><rect x="628.60" y="461.99" width="56.6" height="56.8" rx="8.6" fill="#222830" stroke="#fff" stroke-width="0.7" stroke-opacity=".75"/><rect x="697.00" y="461.99" width="56.6" height="56.8" rx="8.6" fill="#222830" stroke="#fff" stroke-width="0.7" stroke-opacity=".75"/><rect x="765.40" y="461.99" width="56.6" height="56.8" rx="8.6" fill="#222830" stroke="#fff" stroke-width="0.7" stroke-opacity=".75"/><rect x="833.80" y="461.99" width="56.6" height="56.8" rx="8.6" fill="#222830" stroke="#fff" stroke-width="0.7" stroke-opacity=".75"/><rect x="902.20" y="461.99" width="56.6" height="56.8" rx="8.6" fill="#222830" stroke="#fff" stroke-width="0.7" stroke-opacity=".75"/><rect x="970.60" y="461.99" width="56.6" height="56.8" rx="8.6" fill="#222830" stroke="#fff" stroke-width="0.7" stroke-opacity=".75"/><rect x="1039.00" y="461.99" width="56.6" height="56.8" rx="8.6" fill="#222830" stroke="#fff" stroke-width="0.7" stroke-opacity=".75"/><rect x="1107.40" y="461.99" width="56.6" height="56.8" rx="8.6" fill="#222830" stroke="#fff" stroke-width="0.7" stroke-opacity=".75"/><rect x="1175.80" y="461.99" width="56.6" height="56.8" rx="8.6" fill="#222830" stroke="#fff" stroke-width="0.7" stroke-opacity=".75"/><rect x="1244.20" y="461.99" width="56.6" height="56.8" rx="8.6" fill="#222830" stroke="#fff" stroke-width="0.7" stroke-opacity=".75"/><rect x="286.60" y="530.32" width="56.6" height="56.8" rx="8.6" fill="#222830" stroke="#fff" stroke-width="0.7" stroke-opacity=".75"/><rect x="355.00" y="530.32" width="56.6" height="56.8" rx="8.6" fill="#222830" stroke="#fff" stroke-width="0.7" stroke-opacity=".75"/><rect x="423.40" y="530.32" width="56.6" height="56.8" rx="8.6" fill="#222830" stroke="#fff" stroke-width="0.7" stroke-opacity=".75"/><rect x="491.80" y="530.32" width="56.6" height="56.8" rx="8.6" fill="#222830" stroke="#fff" stroke-width="0.7" stroke-opacity=".75"/><rect x="560.20" y="530.32" width="56.6" height="56.8" rx="8.6" fill="#222830" stroke="#fff" stroke-width="0.7" stroke-opacity=".75"/><rect x="628.60" y="530.32" width="56.6" height="56.8" rx="8.6" fill="#222830" stroke="#fff" stroke-width="0.7" stroke-opacity=".75"/><rect x="697.00" y="530.32" width="56.6" height="56.8" rx="8.6" fill="#222830" stroke="#fff" stroke-width="0.7" stroke-opacity=".75"/><rect x="765.40" y="530.32" width="56.6" height="56.8" rx="8.6" fill="#222830" stroke="#fff" stroke-width="0.7" stroke-opacity=".75"/><rect x="833.80" y="530.32" width="56.6" height="56.8" rx="8.6" fill="#222830" stroke="#fff" stroke-width="0.7" stroke-opacity=".75"/><rect x="902.20" y="530.32" width="56.6" height="56.8" rx="8.6" fill="#222830" stroke="#fff" stroke-width="0.7" stroke-opacity=".75"/><rect x="970.60" y="530.32" width="56.6" height="56.8" rx="8.6" fill="#222830" stroke="#fff" stroke-width="0.7" stroke-opacity=".75"/><rect x="1039.00" y="530.32" width="56.6" height="56.8" rx="8.6" fill="#222830" stroke="#fff" stroke-width="0.7" stroke-opacity=".75"/><rect x="1107.40" y="530.32" width="56.6" height="56.8" rx="8.6" fill="#222830" stroke="#fff" stroke-width="0.7" stroke-opacity=".75"/><rect x="1175.80" y="530.32" width="56.6" height="56.8" rx="8.6" fill="#222830" stroke="#fff" stroke-width="0.7" stroke-opacity=".75"/><rect x="1244.20" y="530.32" width="56.6" height="56.8" rx="8.6" fill="#222830" stroke="#fff" stroke-width="0.7" stroke-opacity=".75"/><rect x="286.60" y="598.65" width="56.6" height="56.8" rx="8.6" fill="#222830" stroke="#fff" stroke-width="0.7" stroke-opacity=".75"/><rect x="355.00" y="598.65" width="56.6" height="56.8" rx="8.6" fill="#222830" stroke="#fff" stroke-width="0.7" stroke-opacity=".75"/><rect x="423.40" y="598.65" width="56.6" height="56.8" rx="8.6" fill="#222830" stroke="#fff" stroke-width="0.7" stroke-opacity=".75"/><rect x="491.80" y="598.65" width="56.6" height="56.8" rx="8.6" fill="#222830" stroke="#fff" stroke-width="0.7" stroke-opacity=".75"/><rect x="560.20" y="598.65" width="56.6" height="56.8" rx="8.6" fill="#222830" stroke="#fff" stroke-width="0.7" stroke-opacity=".75"/><rect x="628.60" y="598.65" width="56.6" height="56.8" rx="8.6" fill="#222830" stroke="#fff" stroke-width="0.7" stroke-opacity=".75"/><rect x="697.00" y="598.65" width="56.6" height="56.8" rx="8.6" fill="#222830" stroke="#fff" stroke-width="0.7" stroke-opacity=".75"/><rect x="765.40" y="598.65" width="56.6" height="56.8" rx="8.6" fill="#222830" stroke="#fff" stroke-width="0.7" stroke-opacity=".75"/><rect x="833.80" y="598.65" width="56.6" height="56.8" rx="8.6" fill="#222830" stroke="#fff" stroke-width="0.7" stroke-opacity=".75"/><rect x="902.20" y="598.65" width="56.6" height="56.8" rx="8.6" fill="#222830" stroke="#fff" stroke-width="0.7" stroke-opacity=".75"/><rect x="970.60" y="598.65" width="56.6" height="56.8" rx="8.6" fill="#222830" stroke="#fff" stroke-width="0.7" stroke-opacity=".75"/><rect x="1039.00" y="598.65" width="56.6" height="56.8" rx="8.6" fill="#222830" stroke="#fff" stroke-width="0.7" stroke-opacity=".75"/><rect x="1107.40" y="598.65" width="56.6" height="56.8" rx="8.6" fill="#222830" stroke="#fff" stroke-width="0.7" stroke-opacity=".75"/><rect x="1175.80" y="598.65" width="56.6" height="56.8" rx="8.6" fill="#222830" stroke="#fff" stroke-width="0.7" stroke-opacity=".75"/><rect x="1244.20" y="598.65" width="56.6" height="56.8" rx="8.6" fill="#222830" stroke="#fff" stroke-width="0.7" stroke-opacity=".75"/><rect x="286.60" y="666.98" width="56.6" height="56.8" rx="8.6" fill="#222830" stroke="#fff" stroke-width="0.7" stroke-opacity=".75"/><rect x="355.00" y="666.98" width="56.6" height="56.8" rx="8.6" fill="#222830" stroke="#fff" stroke-width="0.7" stroke-opacity=".75"/><rect x="423.40" y="666.98" width="56.6" height="56.8" rx="8.6" fill="#222830" stroke="#fff" stroke-width="0.7" stroke-opacity=".75"/><rect x="491.80" y="666.98" width="56.6" height="56.8" rx="8.6" fill="#222830" stroke="#fff" stroke-width="0.7" stroke-opacity=".75"/><rect x="560.20" y="666.98" width="56.6" height="56.8" rx="8.6" fill="#222830" stroke="#fff" stroke-width="0.7" stroke-opacity=".75"/><rect x="628.60" y="666.98" width="56.6" height="56.8" rx="8.6" fill="#222830" stroke="#fff" stroke-width="0.7" stroke-opacity=".75"/><rect x="697.00" y="666.98" width="56.6" height="56.8" rx="8.6" fill="#222830" stroke="#fff" stroke-width="0.7" stroke-opacity=".75"/><rect x="765.40" y="666.98" width="56.6" height="56.8" rx="8.6" fill="#222830" stroke="#fff" stroke-width="0.7" stroke-opacity=".75"/><rect x="833.80" y="666.98" width="56.6" height="56.8" rx="8.6" fill="#222830" stroke="#fff" stroke-width="0.7" stroke-opacity=".75"/><rect x="902.20" y="666.98" width="56.6" height="56.8" rx="8.6" fill="#222830" stroke="#fff" stroke-width="0.7" stroke-opacity=".75"/><rect x="970.60" y="666.98" width="56.6" height="56.8" rx="8.6" fill="#222830" stroke="#fff" stroke-width="0.7" stroke-opacity=".75"/><rect x="1039.00" y="666.98" width="56.6" height="56.8" rx="8.6" fill="#222830" stroke="#fff" stroke-width="0.7" stroke-opacity=".75"/><rect x="1107.40" y="666.98" width="56.6" height="56.8" rx="8.6" fill="#222830" stroke="#fff" stroke-width="0.7" stroke-opacity=".75"/><rect x="1175.80" y="666.98" width="56.6" height="56.8" rx="8.6" fill="#222830" stroke="#fff" stroke-width="0.7" stroke-opacity=".75"/><rect x="1244.20" y="666.98" width="56.6" height="56.8" rx="8.6" fill="#222830" stroke="#fff" stroke-width="0.7" stroke-opacity=".75"/><rect x="286.60" y="735.31" width="56.6" height="56.8" rx="8.6" fill="#222830" stroke="#fff" stroke-width="0.7" stroke-opacity=".75"/><rect x="355.00" y="735.31" width="56.6" height="56.8" rx="8.6" fill="#222830" stroke="#fff" stroke-width="0.7" stroke-opacity=".75"/><rect x="423.40" y="735.31" width="56.6" height="56.8" rx="8.6" fill="#222830" stroke="#fff" stroke-width="0.7" stroke-opacity=".75"/><rect x="491.80" y="735.31" width="56.6" height="56.8" rx="8.6" fill="#222830" stroke="#fff" stroke-width="0.7" stroke-opacity=".75"/><rect x="560.20" y="735.31" width="56.6" height="56.8" rx="8.6" fill="#222830" stroke="#fff" stroke-width="0.7" stroke-opacity=".75"/><rect x="628.60" y="735.31" width="56.6" height="56.8" rx="8.6" fill="#222830" stroke="#fff" stroke-width="0.7" stroke-opacity=".75"/><rect x="697.00" y="735.31" width="56.6" height="56.8" rx="8.6" fill="#222830" stroke="#fff" stroke-width="0.7" stroke-opacity=".75"/><rect x="765.40" y="735.31" width="56.6" height="56.8" rx="8.6" fill="#222830" stroke="#fff" stroke-width="0.7" stroke-opacity=".75"/><rect x="833.80" y="735.31" width="56.6" height="56.8" rx="8.6" fill="#222830" stroke="#fff" stroke-width="0.7" stroke-opacity=".75"/><rect x="902.20" y="735.31" width="56.6" height="56.8" rx="8.6" fill="#222830" stroke="#fff" stroke-width="0.7" stroke-opacity=".75"/><rect x="970.60" y="735.31" width="56.6" height="56.8" rx="8.6" fill="#222830" stroke="#fff" stroke-width="0.7" stroke-opacity=".75"/><rect x="1039.00" y="735.31" width="56.6" height="56.8" rx="8.6" fill="#222830" stroke="#fff" stroke-width="0.7" stroke-opacity=".75"/><rect x="1107.40" y="735.31" width="56.6" height="56.8" rx="8.6" fill="#222830" stroke="#fff" stroke-width="0.7" stroke-opacity=".75"/><rect x="1175.80" y="735.31" width="56.6" height="56.8" rx="8.6" fill="#222830" stroke="#fff" stroke-width="0.7" stroke-opacity=".75"/><rect x="1244.20" y="735.31" width="56.6" height="56.8" rx="8.6" fill="#222830" stroke="#fff" stroke-width="0.7" stroke-opacity=".75"/><path d="M254 803.5H295M274.5 783V824" stroke="#6fae6f" stroke-width="1" fill="none"/><circle cx="274.5" cy="803.5" r="4.8" fill="none" stroke="#777" stroke-width="1"/></svg>
<div class="a" style="left:786px;top:830px;width:17px;height:3px;background-image:radial-gradient(circle,#e6f4e6 0.6px,transparent 0.8px),radial-gradient(circle,#9dbf9d 0.6px,transparent 0.8px);background-size:3px 3px,3px 3px;background-position:0 0,1px 1px"></div>
<div class="a" style="left:1528px;top:579px;width:3px;height:17px;background-image:radial-gradient(circle,#e6f4e6 0.6px,transparent 0.8px),radial-gradient(circle,#9dbf9d 0.6px,transparent 0.8px);background-size:3px 3px,3px 3px;background-position:0 0,1px 1px"></div>
<div class="a" style="left:62px;top:836px;width:1463px;height:123px;border:1px solid #3f6e3f;border-radius:4px;background:#c0dcc0;box-shadow:0 0 0 1px #cfe8cf"></div>
<div class="a" style="left:62px;top:959px;width:1464px;height:3px;background:#d0ead0"></div>
<div class="a" style="left:132px;top:963px;width:1372px;height:19px;border:1px solid #3a6a3a;border-radius:4px;background:#7db67d"></div>
<div class="a" style="left:1505px;top:962px;width:20px;height:21px;border:1px solid #5f955f;border-radius:5px;background:linear-gradient(#5a9a5a,#c4e4c4)"></div>
<div class="a" style="left:1507px;top:967px;width:14px;height:10px;border:1px solid #555;border-top:3px solid #000;background:linear-gradient(#8fc08f,#b0d4b0)"></div>
<div class="a" style="left:1532px;top:189px;width:20px;height:81px;border:1px solid #a6c4a6;border-radius:4px;background:#c8e4c8"></div>
<div class="a" style="left:1534px;top:272px;width:20px;height:80px;border:1px solid #a6c4a6;border-radius:4px;background:#b3d2b3"></div>
<div class="a" style="left:1541px;top:505px;width:20px;height:162px;border:1px solid #5f8f5f;border-radius:3px"></div>
<div class="a" style="left:1532px;top:786px;width:17px;height:198px;background:#222830"></div>
<div class="a" style="left:0;top:984px;width:1549px;height:1px;background:#3f6e3f"></div>
<div class="a" style="left:0;top:985px;width:1549px;height:34px;background:#c0dcc0"></div>
<div class="a" style="left:321px;top:987px;width:1px;height:32px;background:#e4f4e4"></div><div class="a" style="left:322px;top:987px;width:1px;height:32px;background:#9fbf9f"></div>
<div class="a" style="left:651px;top:999px;width:1px;height:18px;border-left:1px dotted #a8c4a8"></div>
<div class="a" style="left:1212px;top:999px;width:1px;height:18px;border-left:1px dotted #a8c4a8"></div>
<svg class="a" style="left:921px;top:990px" width="20" height="30" viewBox="0 0 20 30"><path d="M10 1.5c-5 0-8.3 3-8.3 9v12c0 4 3 7 8.3 7s8.300-3 8.300-7v-12c0-6-3.300-9-8.300-9z" fill="#fff" stroke="#555" stroke-width="1.1"/><path d="M1.700 13.500c5 1.500 11.600 1.500 16.600 0" fill="none" stroke="#555" stroke-width="1"/><rect x="8.300" y="3.500" width="3.400" height="8" rx="1.700" fill="#fff" stroke="#555" stroke-width="1"/></svg>
<div class="t" id="t0" style="left:880.94px;top:-2.0px;font-weight:bold;color:#a6a6a6;transform:scaleX(0.9600)">Sample-File.dxf - QCAD</div>
<div class="t" id="t1" style="left:2.58px;top:22.0px;color:#1f431f;transform:scaleX(1.0250)"><u>F</u>ile</div>
<div class="t" id="t2" style="left:37.55px;top:22.0px;color:#1f431f;transform:scaleX(1.0455)"><u>E</u>dit</div>
<div class="t" id="t3" style="left:76.60px;top:22.0px;color:#1f431f;transform:scaleX(0.9655)"><u>V</u>iew</div>
<div class="t" id="t4" style="left:118.63px;top:22.0px;color:#1f431f;transform:scaleX(0.9730)"><u>S</u>elect</div>
<div class="t" id="t5" style="left:169.60px;top:22.0px;color:#1f431f;transform:scaleX(1.0000)"><u>D</u>raw</div>
<div class="t" id="t6" style="left:215.58px;top:22.0px;color:#1f431f;transform:scaleX(1.0161)">D<u>i</u>mension</div>
<div class="t" id="t7" style="left:293.60px;top:22.0px;color:#1f431f;transform:scaleX(1.0000)"><u>M</u>odify</div>
<div class="t" id="t8" style="left:347.60px;top:22.0px;color:#1f431f;transform:scaleX(1.0000)"><u>S</u>nap</div>
<div class="t" id="t9" style="left:392.55px;top:22.0px;color:#1f431f;transform:scaleX(1.0476)"><u>I</u>nfo</div>
<div class="t" id="t10" style="left:429.60px;top:22.0px;color:#1f431f;transform:scaleX(1.0000)"><u>L</u>ayer</div>
<div class="t" id="t11" style="left:477.60px;top:22.0px;color:#1f431f;transform:scaleX(1.0000)"><u>B</u>lock</div>
<div class="t" id="t12" style="left:525.60px;top:22.0px;color:#1f431f;transform:scaleX(0.9792)"><u>W</u>indow</div>
<div class="t" id="t13" style="left:586.60px;top:22.0px;color:#1f431f;transform:scaleX(1.0000)"><u>M</u>isc</div>
<div class="t" id="t14" style="left:627.64px;top:22.0px;color:#1f431f;transform:scaleX(0.9643)"><u>C</u>AM</div>
<div class="t" id="t15" style="left:668.56px;top:22.0px;color:#1f431f;transform:scaleX(1.0385)"><u>H</u>elp</div>
<div class="t" id="t16" style="left:10.60px;top:162.0px;color:#274a27;transform:scaleX(1.0000)">G-Code (G41/G42) [mm]</div>
<div class="t" id="t17" style="left:747.01px;top:197.0px;color:#3a5a3a;transform:scaleX(0.9892)">Sample-File.dxf</div>
<div class="t" id="t18" style="left:66.62px;top:841.0px;color:#2a462a;transform:scaleX(0.9825)">QCAD 3.27.7 / Linux x86_64</div>
<div class="t" id="t19" style="left:66.60px;top:856.0px;color:#2a462a;transform:scaleX(1.0045)">Opening drawing: /home/john/Desktop/Sample-File.dxf...</div>
<div class="t" id="t20" style="left:66.60px;top:871.0px;color:#2a462a;transform:scaleX(1.0000)">Drawing loaded successfully: /home/john/Desktop/Sample-File.dxf</div>
<div class="t" id="t21" style="left:66.60px;top:886.0px;color:#2a462a;transform:scaleX(0.9970)">Format: R27 (2013) DXF Drawing (OpenDesign) (*.dxf)</div>
<div class="t" id="t22" style="left:62.09px;top:964.0px;color:#2a462a;transform:scaleX(1.0078)">Command:</div>
<div class="t" id="t23" style="left:1535.91px;top:434.0px;font-weight:bold;color:#1e3a1e;transform:scaleX(1.0600)">Pr</div>
<div class="t" id="t24" style="left:1541.60px;top:462.0px;color:#2c472c;transform:scaleX(1.0600)">S</div>
<div class="t" id="t25" style="left:1544.10px;top:485.0px;font-weight:bold;color:#6d936d;transform:scaleX(1.0600)">G</div>
<div class="t" id="t26" style="left:1537.10px;top:769.0px;font-weight:bold;color:#1e3a1e;transform:scaleX(1.0600)">Cl</div>
<div class="t" id="t27" style="left:-0.42px;top:990.0px;color:#2c472c;transform:scaleX(1.0176)">163.86,252.46</div>
<div class="t" id="t28" style="left:-5.40px;top:1009.0px;color:#2c472c;transform:scaleX(1.0000)">@-163.86,252.46</div>
<div class="t" id="t29" style="left:324.86px;top:990.0px;color:#2c472c;transform:scaleX(1.0427)">300.97<123°</div>
<div class="t" id="t30" style="left:324.88px;top:1009.0px;color:#2c472c;transform:scaleX(1.0247)">@300.97<123°</div>
<div class="t" id="t31" style="left:774.58px;top:1000.0px;color:#2c472c;transform:scaleX(1.0233)">Select entity or region</div>
<div class="t" id="t32" style="left:1215.57px;top:1000.0px;color:#2c472c;transform:scaleX(1.0252)">No entities selected.</div>
<div class="t" id="v0" style="left:1538px;top:258.5px;font-size:13px;color:#3a5a3a;transform-origin:0 0;transform:rotate(-90deg) scaleX(1.0455)">Layer List</div>
<div class="t" id="v1" style="left:1538px;top:339.7px;font-size:13px;color:#3a5a3a;transform-origin:0 0;transform:rotate(-90deg) scaleX(1.0127)">Block List</div></div></body></html>
